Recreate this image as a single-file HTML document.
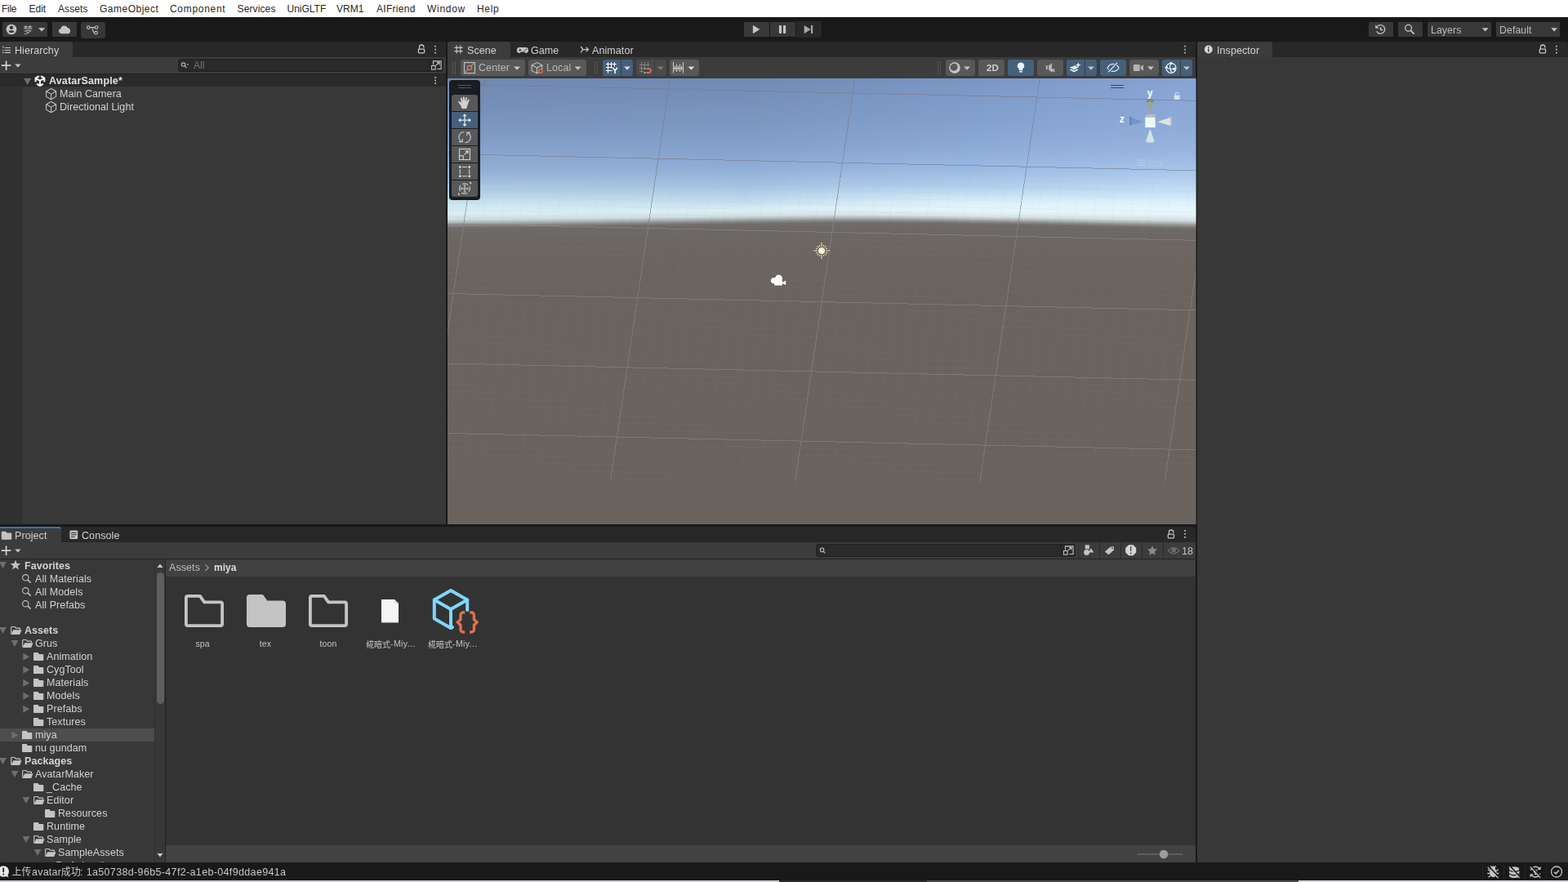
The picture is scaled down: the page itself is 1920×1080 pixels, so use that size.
<!DOCTYPE html>
<html><head><meta charset="utf-8"><title>Unity</title>
<style>
*{box-sizing:border-box;margin:0;padding:0}
html,body{width:1920px;height:1080px;overflow:hidden;background:#191919}
body{font-family:"Liberation Sans",sans-serif;font-size:12.5px;color:#d2d2d2;position:relative;letter-spacing:.08px;-webkit-font-smoothing:antialiased}
.a{position:absolute}
.t{position:absolute;white-space:nowrap;line-height:16px;height:16px;will-change:transform}
.b{font-weight:bold;letter-spacing:.06px}
svg{position:absolute;overflow:visible}
#menu{left:0;top:0;width:1920px;height:21px;background:#fff;color:#262626;font-size:12px;letter-spacing:0}
#menu span{position:absolute;top:3px;line-height:16px;white-space:nowrap}
#tb{left:0;top:21px;width:1920px;height:30px;background:#191919}
.tbb{position:absolute;top:27px;height:18px;background:#383838;border-radius:1px}
.tabrow{position:absolute;top:51px;height:19px;background:#282828}
.tab{position:absolute;top:0;height:19px;background:#3c3c3c;border-radius:3px 3px 0 0}
.ptb{position:absolute;background:#3c3c3c}
.pan{position:absolute;background:#383838}
.sb{position:absolute;top:73px;height:20px;background:#585858;border-radius:3px}
.sb.on{background:#46607c}
.sf{position:absolute;background:#2a2a2a;border:1px solid #212121;border-radius:3px}
.row{position:absolute;left:0;height:16px}
.ov{position:absolute;left:553px;width:32px;height:20px;background:#585858}
</style></head><body>
<!-- MENU -->
<div id="menu" class="a">
<span style="left:2px;letter-spacing:-.3px">File</span><span style="left:35.500px">Edit</span><span style="left:71px;letter-spacing:.1px">Assets</span><span style="left:122px;letter-spacing:.5px">GameObject</span><span style="left:208px;letter-spacing:.7px">Component</span><span style="left:290.500px;letter-spacing:.13px">Services</span><span style="left:351.500px">UniGLTF</span><span style="left:412px">VRM1</span><span style="left:461px;letter-spacing:.3px">AIFriend</span><span style="left:523px;letter-spacing:.7px">Window</span><span style="left:584px;letter-spacing:.65px">Help</span>
</div>
<!-- MAIN TOOLBAR -->
<div id="tb" class="a"></div>
<div class="tbb" style="left:3px;width:55px"></div>
<div class="tbb" style="left:64px;width:30px"></div>
<div class="tbb" style="left:99px;width:30px;height:20px;border-radius:3px"></div>
<svg style="left:0;top:21px" width="140" height="30" viewBox="0 21 140 30">
 <!-- account -->
 <circle cx="14" cy="36" r="6.3" fill="#c4c4c4"/>
 <circle cx="14" cy="33.800" r="2.200" fill="#383838"/>
 <ellipse cx="14" cy="38.700" rx="3.200" ry="1.400" fill="#383838"/>
 <!-- meng glyph -->
 <text x="28.3" y="41.2" font-size="11.8" fill="#b2b2b2" font-family="'Liberation Sans','Noto Sans CJK SC',sans-serif" letter-spacing="0">梦</text>
 <path d="M47 34.2h8.2l-4.1 4.4z" fill="#c4c4c4"/>
 <!-- cloud -->
 <path d="M74.8 41.2a3.1 3.1 0 0 1 -.5 -6.1a4.6 4.6 0 0 1 8.7 -.9a3.6 3.6 0 0 1 .6 7z" fill="#c4c4c4"/>
 <!-- vcs -->
 <g fill="none" stroke="#c4c4c4" stroke-width="1.1">
  <circle cx="108.300" cy="33.600" r="1.800"/><circle cx="118.100" cy="33.600" r="1.800"/><circle cx="117.500" cy="40.200" r="1.800"/>
  <path d="M110.100 33.600h6.200M112.400 33.700c1.400 0 1 6.500 3.400 6.500"/>
 </g>
</svg>
<!-- play controls -->
<div class="tbb" style="left:911px;width:31px;border-radius:1px 0 0 1px"></div>
<div class="tbb" style="left:943px;width:31px;border-radius:0"></div>
<div class="tbb" style="left:975px;width:30.5px;top:26px;height:19.5px;background:#28292a;border-radius:0 3px 3px 0"></div>
<svg style="left:905px;top:21px" width="110" height="30" viewBox="905 21 110 30">
 <path d="M921.9 30.8v10.4l8.5 -5.2z" fill="#c4c4c4"/>
 <rect x="953.9" y="31" width="3.2" height="10" rx="1" fill="#c4c4c4"/><rect x="959" y="31" width="3.2" height="10" rx="1" fill="#c4c4c4"/>
 <path d="M984.7 30.9v10.3l8 -5.15z" fill="#a4a8a8"/><rect x="993" y="31" width="2.2" height="10" fill="#a4a8a8"/>
</svg>
<!-- right -->
<div class="tbb" style="left:1676px;width:30px"></div>
<div class="tbb" style="left:1712px;width:30px"></div>
<div class="tbb" style="left:1748px;width:78px"></div>
<div class="tbb" style="left:1832px;width:78px"></div>
<div class="t" style="left:1751.500px;top:28.500px;color:#bcbcbc;font-size:12.300px">Layers</div>
<div class="t" style="left:1835.500px;top:28.500px;color:#bcbcbc;font-size:12.300px">Default</div>
<svg style="left:1670px;top:21px" width="250" height="30" viewBox="1670 21 250 30">
 <g fill="none" stroke="#c4c4c4" stroke-width="1.3">
  <path d="M1686.2 32.6a5.3 5.3 0 1 1 -.6 5.6"/>
  <path d="M1690.6 33.2v3.2h2.6" stroke-width="1.5"/>
  <circle cx="1724.6" cy="34.3" r="3.9"/><path d="M1727.4 37.3l4.2 4.4" stroke-width="1.8"/>
 </g>
 <path d="M1684.2 30.6v4.2h4.2z" fill="#c4c4c4"/>
 <path d="M1814.8 34.2h7.8l-3.9 4.2z" fill="#c4c4c4"/><path d="M1899.2 34.2h7.8l-3.9 4.2z" fill="#c4c4c4"/>
</svg>
<!-- HIERARCHY -->
<div class="tabrow" style="left:0;width:546px"><div class="tab" style="left:0;width:89px;border-radius:0 3px 0 0"></div></div>
<div class="ptb" style="left:0;top:70px;width:546px;height:20px"></div>
<div class="pan" style="left:0;top:90px;width:546px;height:552px"></div>
<div class="a" style="left:0;top:106px;width:27px;height:536px;background:#303030"></div>
<div class="a" style="left:0;top:90px;width:546px;height:16px;background:#2a2a2a;border-top:1px solid #222"></div>
<div class="t" style="left:18px;top:54px">Hierarchy</div>
<div class="sf" style="left:218px;top:72px;width:325px;height:15.5px"></div>
<div class="t" style="left:236.500px;top:72px;color:#747474;font-size:12px">All</div>
<div class="t b" style="left:60px;top:91px;color:#e0e0e0;letter-spacing:.17px">AvatarSample*</div>
<div class="t" style="left:73px;top:107px">Main Camera</div>
<div class="t" style="left:73px;top:123px">Directional Light</div>
<svg style="left:0;top:51px" width="546" height="100" viewBox="0 51 546 100">
 <!-- tab icon -->
 <g stroke="#c4c4c4" stroke-width="1.1" fill="none"><path d="M5.6 58.5H13M5.6 61.5H13M5.6 64.4H13"/></g>
 <g fill="#c4c4c4"><rect x="3" y="56.6" width="1.4" height="1.6"/><rect x="3" y="60.8" width="1.4" height="1.4"/><rect x="3" y="63.7" width="1.4" height="1.4"/></g>
 <!-- lock + kebab -->
 <g id="lk"><rect x="512.4" y="60.2" width="7.200" height="4.700" rx=".8" fill="none" stroke="#c4c4c4" stroke-width="1.300"/><path d="M513.5 60.0v-2.300a2.700 2.700 0 0 1 5.400 0v.7" fill="none" stroke="#c4c4c4" stroke-width="1.300"/></g>
 <g id="kb" fill="#c4c4c4"><rect x="532.2" y="55.8" width="1.7" height="1.7"/><rect x="532.2" y="59.8" width="1.7" height="1.7"/><rect x="532.2" y="63.8" width="1.7" height="1.7"/></g>
 <!-- plus -->
 <g id="pl"><path d="M1.8 80.2h11.6M7.6 74.4v11.6" stroke="#d2d2d2" stroke-width="1.7" fill="none"/><path d="M18.2 78.4h7.4l-3.7 4z" fill="#c4c4c4"/></g>
 <!-- search icon -->
 <g fill="none" stroke="#b4b4b4" stroke-width="1.2"><circle cx="224.6" cy="79" r="2.2"/><path d="M226.2 80.7l2.1 2.3"/></g><path d="M228.6 78.6h2.8l-1.4 1.6z" fill="#b4b4b4"/>
 <path d="M525.500 72.500v14.500" stroke="#1f1f1f" stroke-width="1"/>
 <!-- search window icon -->
 <g id="sw" fill="none" stroke="#c4c4c4" stroke-width="1.1"><path d="M530.5 79.5v-4.6h9.6v9.6h-4.6"/><rect x="528.5" y="80.5" width="4.6" height="4.6"/><path d="M533.6 80.2l4.2 -3.6M535 76.4h3v3" /></g>
 <!-- scene row -->
 <path d="M29.2 96h9l-4.5 8z" fill="#6e6e6e"/>
 <g id="ul" fill="none" stroke="#e9f3f7" stroke-width="2.100" stroke-linejoin="miter"><path d="M48.950 98.800L43.580 95.700M47.880 93.220L43.580 95.700V100.160M48.950 98.800L54.320 95.700M50.020 93.220L54.320 95.700V100.160M48.950 98.800V105M45.080 102.770L48.950 105L52.820 102.770"/></g>
 <rect x="532.3" y="94" width="1.7" height="1.7" fill="#c4c4c4"/><rect x="532.3" y="97.6" width="1.7" height="1.7" fill="#c4c4c4"/><rect x="532.3" y="101.2" width="1.7" height="1.7" fill="#c4c4c4"/>
 <!-- cubes -->
 <g id="cb" fill="none" stroke="#c4c4c4" stroke-width="1.05" stroke-linejoin="round"><path d="M62.6 108.5l6 3.3v6.6l-6 3.3l-6 -3.3v-6.6zM56.6 111.8l6 3.3l6 -3.3M62.6 115.1v6.6"/></g>
 <use href="#cb" y="16"/>
</svg>
<!-- SCENE TABS + TOOLBAR -->
<div class="tabrow" style="left:548px;width:916px"><div class="tab" style="left:0;width:77px"></div></div>
<div class="ptb" style="left:548px;top:70px;width:916px;height:26px"></div>
<div class="t" style="left:572px;top:53.500px">Scene</div>
<div class="t" style="left:650px;top:53.500px">Game</div>
<div class="t" style="left:725px;top:53.500px">Animator</div>
<div class="sb" style="left:564px;width:79px"></div>
<div class="sb" style="left:647px;width:71px"></div>
<div class="sb on" style="left:738px;width:22px;border-radius:3px 0 0 3px"></div><div class="sb on" style="left:761px;width:14px;border-radius:0 3px 3px 0"></div>
<div class="sb" style="left:779px;width:22px;border-radius:3px 0 0 3px;background:#4a4a4a"></div><div class="sb" style="left:802px;width:14px;border-radius:0 3px 3px 0;background:#4a4a4a"></div>
<div class="sb" style="left:820px;width:36px"></div>
<div class="sb" style="left:1158px;width:36px"></div>
<div class="sb" style="left:1198px;width:32px"></div>
<div class="sb on" style="left:1234px;width:32px"></div>
<div class="sb" style="left:1270px;width:32px"></div>
<div class="sb on" style="left:1306px;width:22px;border-radius:3px 0 0 3px"></div><div class="sb on" style="left:1329px;width:14px;border-radius:0 3px 3px 0"></div>
<div class="sb on" style="left:1347px;width:32px"></div>
<div class="sb" style="left:1383px;width:36px"></div>
<div class="sb on" style="left:1423px;width:22px;border-radius:3px 0 0 3px"></div><div class="sb on" style="left:1446px;width:14px;border-radius:0 3px 3px 0"></div>
<div class="t" style="left:585.5px;top:75px;color:#b8b8b8">Center</div>
<div class="t" style="left:668.5px;top:75px;color:#b8b8b8">Local</div>
<div class="t b" style="left:1207.5px;top:75px;color:#d0d0d0;font-size:11.5px;letter-spacing:0">2D</div>
<svg style="left:548px;top:51px" width="916" height="45" viewBox="548 51 916 45">
 <!-- tab icons -->
 <path d="M559.2 55.4v10M563.8 55.4v10M556.4 58.4h10.2M556.4 62.6h10.2" stroke="#c4c4c4" stroke-width="1.2" fill="none"/>
 <path d="M636.3 58h7.2a3.4 3.4 0 0 1 0 6.9l-1.7 -1.5h-3.8l-1.7 1.5a3.4 3.4 0 0 1 0 -6.9z" fill="#c4c4c4"/>
 <path d="M635.3 61.3h3M636.8 59.8v3" stroke="#282828" stroke-width="1"/><circle cx="642.4" cy="62.3" r=".8" fill="#282828"/><circle cx="644.2" cy="60.5" r=".8" fill="#282828"/>
 <g fill="none" stroke="#c4c4c4" stroke-width="1.3"><path d="M711.2 57l2.6 3.6h6.2M713.8 60.6l-2.6 3.8"/><path d="M717.8 58l2.6 2.6l-2.6 2.6"/></g>
 <rect x="1450.2" y="55.8" width="1.7" height="1.7" fill="#c4c4c4"/><rect x="1450.2" y="59.8" width="1.7" height="1.7" fill="#c4c4c4"/><rect x="1450.2" y="63.8" width="1.7" height="1.7" fill="#c4c4c4"/>
 <!-- separators -->
 <g stroke="#555" stroke-width="1"><path d="M554.5 75v16M557.5 75v16M728.5 75v16M731.5 75v16M1148.5 75v16M1151.5 75v16"/></g>
 <!-- center icon -->
 <rect x="568.5" y="76.6" width="13" height="13" fill="none" stroke="#c4c4c4" stroke-width="1.1"/>
 <path d="M570 88l3 -3M577 80.8l3 -3" stroke="#c4c4c4" stroke-width="1.1" stroke-dasharray="1.6 1"/>
 <circle cx="575" cy="83.1" r="2.6" fill="none" stroke="#e8734a" stroke-width="1.3"/>
 <path d="M629 81.4h8l-4 4.3z" fill="#c4c4c4"/>
 <!-- local icon -->
 <g fill="none" stroke="#c4c4c4" stroke-width="1.05" stroke-linejoin="round"><path d="M657.5 76.6l6.3 3.2v6.8l-6.3 3.2l-6.3 -3.2v-6.8zM651.2 79.8l6.3 3.2l6.3 -3.2M657.5 83v6.8"/></g>
 <circle cx="661.9" cy="86.9" r="2.9" fill="#585858"/><circle cx="661.9" cy="86.9" r="2.3" fill="none" stroke="#e8734a" stroke-width="1.3"/>
 <path d="M703.6 81.4h8l-4 4.3z" fill="#c4c4c4"/>
 <!-- grid Y -->
 <g stroke="#fff" stroke-width="1" fill="none"><path d="M744.500 76v13.500M748.500 76v7.500M752.500 76v5.500M742 78.500h13M742 82.500h7.500M742 86.500h7.500"/><path d="M750.300 82.800l2.800 3.700l2.800 -3.700M753.100 86.500v3.600" stroke-width="1.500"/></g>
 <path d="M764 81.4h8l-4 4.3z" fill="#d8d8d8"/>
 <!-- snap -->
 <g stroke="#8a8282" stroke-width="1" fill="none"><path d="M785.500 76v13M789.500 76v6.500M793.500 76v5.500M783 79.500h12.500M783 83.500h5M783 87.500h5"/></g>
 <path d="M791.400 84.100h3a2.500 2.500 0 0 1 0 5h-3" fill="none" stroke="#d77a56" stroke-width="1.600"/>
 <rect x="788.500" y="83.200" width="1.900" height="1.800" fill="#b8c0c0"/><rect x="788.500" y="88.200" width="1.900" height="1.800" fill="#b8c0c0"/>
 <path d="M805 81.4h8l-4 4.3z" fill="#7d7878"/>
 <!-- ruler -->
 <g stroke="#d0d0d0" stroke-width="1" fill="none"><path d="M824.500 76v13.500M836.500 76v13.500M824.500 83.500h12M826.500 80.500v6M828.500 78.500v9.500M830.500 80.500v6M832.500 78.500v9.500M834.500 80.500v6"/></g>
 <path d="M842.4 81.4h8l-4 4.3z" fill="#d8d8d8"/>
 <!-- shading -->
 <circle cx="1169" cy="83" r="6.600" fill="#c4c4c4"/><circle cx="1168" cy="82" r="4.700" fill="#585858"/><circle cx="1169" cy="83" r="6.100" fill="none" stroke="#c4c4c4" stroke-width="1.100"/>
 <path d="M1180 81.4h8l-4 4.3z" fill="#c4c4c4"/>
 <!-- bulb -->
 <path d="M1250 76.4a4.2 4.2 0 0 1 2.3 7.7v1.8h-4.6v-1.8a4.2 4.2 0 0 1 2.3 -7.7z" fill="#e8f1f5"/><path d="M1247.9 86.8h4.2a2.1 2.1 0 0 1 -4.2 0z" fill="#e8f1f5"/>
 <!-- audio -->
 <rect x="1280.8" y="80" width="2" height="5.2" fill="#b4b4b4"/><path d="M1284 80.2l4 -3v11.4l-4 -3z" fill="#b4b4b4"/>
 <path d="M1287.6 84.2l3.8 3.8M1291.4 84.2l-3.8 3.8" stroke="#c4c4c4" stroke-width="1.2"/>
 <!-- fx -->
 <g fill="#e8f1f5"><path d="M1316.4 80.3l4.2 2.3l-5.4 2.8l-5.4 -2.8z"/><path d="M1309.8 85.5l1.6 -.9l3.8 2l3.8 -2l1.6 .9l-5.4 2.9z"/><path d="M1320.3 76.2l.9 2.5l2.5 .9l-2.5 .9l-.9 2.5l-.9 -2.5l-2.5 -.9l2.5 -.9z"/></g>
 <path d="M1332 81.4h8l-4 4.3z" fill="#c4c4c4"/>
 <!-- hidden eye -->
 <path d="M1356 83c2 -3.4 5 -4.6 7.200 -4.600c3 0 5.600 2 6.800 4.600c-1.200 2.600 -3.800 4.400 -6.800 4.400c-3 0 -5.600 -1.600 -7.200 -4.400z" fill="none" stroke="#dfe8ec" stroke-width="1.2"/>
 <path d="M1357.200 88.400l10.800 -11.600" stroke="#46607c" stroke-width="3.200"/><path d="M1357.200 88.400l10.800 -11.600" stroke="#dfe8ec" stroke-width="1.300"/>
 <!-- camera -->
 <rect x="1387.800" y="79" width="8" height="8" rx="1" fill="#b4b4b4"/><path d="M1396.800 81.600l3.200 -2.400v7.600l-3.200 -2.400z" fill="#b4b4b4"/>
 <path d="M1405 81.400h8l-4 4.300z" fill="#c4c4c4"/>
 <!-- gizmo sphere -->
 <g fill="none" stroke="#eef4f7" stroke-width="1.200"><circle cx="1434" cy="83.300" r="6"/><path d="M1428.200 82.400c3.200 2.600 8 2.600 11.600 .4M1434 77.300c-2.600 3.800 -1.600 9 1.600 11.600"/></g>
 <g fill="#eef4f7"><circle cx="1434" cy="77.200" r="1.500"/><circle cx="1428.300" cy="82.300" r="1.500"/><circle cx="1437.600" cy="84.600" r="1.500"/></g>
 <path d="M1449 81.400h8l-4 4.300z" fill="#c4c4c4"/>
</svg>
<!-- SCENE VIEW -->
<svg style="left:548px;top:96px" width="916" height="546" viewBox="548 96 916 546">
<defs>
<linearGradient id="g0" gradientUnits="userSpaceOnUse" x1="0" y1="96" x2="0" y2="642"><stop offset="0.0019" stop-color="#7088b2"/><stop offset="0.1081" stop-color="#7b96bf"/><stop offset="0.1612" stop-color="#86a2cc"/><stop offset="0.2088" stop-color="#93b0d5"/><stop offset="0.2510" stop-color="#aecbe3"/><stop offset="0.2858" stop-color="#d0e8f0"/><stop offset="0.3041" stop-color="#d8eef2"/><stop offset="0.3169" stop-color="#cbdbe0"/><stop offset="0.3242" stop-color="#a8aeb0"/><stop offset="0.3297" stop-color="#878685"/><stop offset="0.3352" stop-color="#706c6a"/><stop offset="0.3407" stop-color="#6d6967"/><stop offset="0.3810" stop-color="#6c6561"/><stop offset="0.4451" stop-color="#6a635e"/><stop offset="1" stop-color="#6a625d"/></linearGradient>
<linearGradient id="g1" gradientUnits="userSpaceOnUse" x1="0" y1="96" x2="0" y2="642"><stop offset="0.0016" stop-color="#7088b2"/><stop offset="0.1078" stop-color="#7b96bf"/><stop offset="0.1610" stop-color="#86a2cc"/><stop offset="0.2086" stop-color="#93b0d5"/><stop offset="0.2507" stop-color="#aecbe3"/><stop offset="0.2855" stop-color="#d0e8f0"/><stop offset="0.3038" stop-color="#d8eef2"/><stop offset="0.3166" stop-color="#cbdbe0"/><stop offset="0.3240" stop-color="#a8aeb0"/><stop offset="0.3295" stop-color="#878685"/><stop offset="0.3349" stop-color="#706c6a"/><stop offset="0.3404" stop-color="#6d6967"/><stop offset="0.3807" stop-color="#6c6561"/><stop offset="0.4448" stop-color="#6a635e"/><stop offset="1" stop-color="#6a625d"/></linearGradient>
<linearGradient id="g2" gradientUnits="userSpaceOnUse" x1="0" y1="96" x2="0" y2="642"><stop offset="0.0013" stop-color="#7088b2"/><stop offset="0.1076" stop-color="#7b96bf"/><stop offset="0.1607" stop-color="#86a2cc"/><stop offset="0.2083" stop-color="#93b0d5"/><stop offset="0.2504" stop-color="#aecbe3"/><stop offset="0.2852" stop-color="#d0e8f0"/><stop offset="0.3035" stop-color="#d8eef2"/><stop offset="0.3164" stop-color="#cbdbe0"/><stop offset="0.3237" stop-color="#a8aeb0"/><stop offset="0.3292" stop-color="#878685"/><stop offset="0.3347" stop-color="#706c6a"/><stop offset="0.3402" stop-color="#6d6967"/><stop offset="0.3805" stop-color="#6c6561"/><stop offset="0.4446" stop-color="#6a635e"/><stop offset="1" stop-color="#6a625d"/></linearGradient>
<linearGradient id="g3" gradientUnits="userSpaceOnUse" x1="0" y1="96" x2="0" y2="642"><stop offset="0.0011" stop-color="#7088b2"/><stop offset="0.1073" stop-color="#7b96bf"/><stop offset="0.1604" stop-color="#86a2cc"/><stop offset="0.2080" stop-color="#93b0d5"/><stop offset="0.2502" stop-color="#aecbe3"/><stop offset="0.2850" stop-color="#d0e8f0"/><stop offset="0.3033" stop-color="#d8eef2"/><stop offset="0.3161" stop-color="#cbdbe0"/><stop offset="0.3234" stop-color="#a8aeb0"/><stop offset="0.3289" stop-color="#878685"/><stop offset="0.3344" stop-color="#706c6a"/><stop offset="0.3399" stop-color="#6d6967"/><stop offset="0.3802" stop-color="#6c6561"/><stop offset="0.4443" stop-color="#6a635e"/><stop offset="1" stop-color="#6a625d"/></linearGradient>
<linearGradient id="g4" gradientUnits="userSpaceOnUse" x1="0" y1="96" x2="0" y2="642"><stop offset="0.0008" stop-color="#7088b2"/><stop offset="0.1070" stop-color="#7b96bf"/><stop offset="0.1601" stop-color="#86a2cc"/><stop offset="0.2078" stop-color="#93b0d5"/><stop offset="0.2499" stop-color="#aecbe3"/><stop offset="0.2847" stop-color="#d0e8f0"/><stop offset="0.3030" stop-color="#d8eef2"/><stop offset="0.3158" stop-color="#cbdbe0"/><stop offset="0.3232" stop-color="#a8aeb0"/><stop offset="0.3286" stop-color="#878685"/><stop offset="0.3341" stop-color="#706c6a"/><stop offset="0.3396" stop-color="#6d6967"/><stop offset="0.3799" stop-color="#6c6561"/><stop offset="0.4440" stop-color="#6a635e"/><stop offset="1" stop-color="#6a625d"/></linearGradient>
<linearGradient id="g5" gradientUnits="userSpaceOnUse" x1="0" y1="96" x2="0" y2="642"><stop offset="0.0005" stop-color="#7088b2"/><stop offset="0.1068" stop-color="#7b96bf"/><stop offset="0.1599" stop-color="#86a2cc"/><stop offset="0.2075" stop-color="#93b0d5"/><stop offset="0.2496" stop-color="#aecbe3"/><stop offset="0.2844" stop-color="#cfe7f0"/><stop offset="0.3027" stop-color="#d8eef2"/><stop offset="0.3156" stop-color="#cbdbe0"/><stop offset="0.3229" stop-color="#a8aeb0"/><stop offset="0.3284" stop-color="#878685"/><stop offset="0.3339" stop-color="#706c6a"/><stop offset="0.3394" stop-color="#6d6967"/><stop offset="0.3797" stop-color="#6c6561"/><stop offset="0.4438" stop-color="#6a635e"/><stop offset="1" stop-color="#6a625d"/></linearGradient>
<linearGradient id="g6" gradientUnits="userSpaceOnUse" x1="0" y1="96" x2="0" y2="642"><stop offset="0.0003" stop-color="#7088b2"/><stop offset="0.1065" stop-color="#7b96bf"/><stop offset="0.1596" stop-color="#86a2cc"/><stop offset="0.2072" stop-color="#93b0d5"/><stop offset="0.2494" stop-color="#adcae3"/><stop offset="0.2842" stop-color="#cfe7f0"/><stop offset="0.3025" stop-color="#d8eef2"/><stop offset="0.3153" stop-color="#cbdce1"/><stop offset="0.3226" stop-color="#a8aeb0"/><stop offset="0.3281" stop-color="#878685"/><stop offset="0.3336" stop-color="#706c6a"/><stop offset="0.3391" stop-color="#6d6967"/><stop offset="0.3794" stop-color="#6c6561"/><stop offset="0.4435" stop-color="#6a635e"/><stop offset="1" stop-color="#6a625d"/></linearGradient>
<linearGradient id="g7" gradientUnits="userSpaceOnUse" x1="0" y1="96" x2="0" y2="642"><stop offset="0.0000" stop-color="#7088b2"/><stop offset="0.1062" stop-color="#7b96bf"/><stop offset="0.1593" stop-color="#86a2cc"/><stop offset="0.2070" stop-color="#92b0d5"/><stop offset="0.2491" stop-color="#adcae3"/><stop offset="0.2839" stop-color="#cee6f0"/><stop offset="0.3022" stop-color="#d8eef3"/><stop offset="0.3150" stop-color="#ccdce1"/><stop offset="0.3223" stop-color="#a8aeb0"/><stop offset="0.3278" stop-color="#878685"/><stop offset="0.3333" stop-color="#706c6a"/><stop offset="0.3388" stop-color="#6d6967"/><stop offset="0.3791" stop-color="#6c6561"/><stop offset="0.4432" stop-color="#6a635e"/><stop offset="1" stop-color="#6a625d"/></linearGradient>
<linearGradient id="g8" gradientUnits="userSpaceOnUse" x1="0" y1="96" x2="0" y2="642"><stop offset="0.0000" stop-color="#7088b2"/><stop offset="0.1058" stop-color="#7b96bf"/><stop offset="0.1589" stop-color="#85a2cc"/><stop offset="0.2065" stop-color="#92afd5"/><stop offset="0.2487" stop-color="#acc9e3"/><stop offset="0.2835" stop-color="#cde6f0"/><stop offset="0.3018" stop-color="#d9eef3"/><stop offset="0.3146" stop-color="#ccdce1"/><stop offset="0.3219" stop-color="#a8aeb0"/><stop offset="0.3274" stop-color="#878685"/><stop offset="0.3329" stop-color="#706c6a"/><stop offset="0.3384" stop-color="#6d6967"/><stop offset="0.3787" stop-color="#6c6561"/><stop offset="0.4428" stop-color="#6a635e"/><stop offset="1" stop-color="#6a625d"/></linearGradient>
<linearGradient id="g9" gradientUnits="userSpaceOnUse" x1="0" y1="96" x2="0" y2="642"><stop offset="0.0000" stop-color="#7089b3"/><stop offset="0.1054" stop-color="#7b96c0"/><stop offset="0.1585" stop-color="#85a1cc"/><stop offset="0.2061" stop-color="#92afd5"/><stop offset="0.2483" stop-color="#acc9e3"/><stop offset="0.2831" stop-color="#cde5ef"/><stop offset="0.3014" stop-color="#d9eff3"/><stop offset="0.3142" stop-color="#ccdce2"/><stop offset="0.3215" stop-color="#a9afb1"/><stop offset="0.3270" stop-color="#878685"/><stop offset="0.3325" stop-color="#706c6a"/><stop offset="0.3380" stop-color="#6d6967"/><stop offset="0.3783" stop-color="#6c6561"/><stop offset="0.4424" stop-color="#6a635e"/><stop offset="1" stop-color="#6a625d"/></linearGradient>
<linearGradient id="g10" gradientUnits="userSpaceOnUse" x1="0" y1="96" x2="0" y2="642"><stop offset="0.0000" stop-color="#7089b3"/><stop offset="0.1050" stop-color="#7b96c0"/><stop offset="0.1581" stop-color="#85a1cc"/><stop offset="0.2057" stop-color="#92afd5"/><stop offset="0.2478" stop-color="#abc8e3"/><stop offset="0.2826" stop-color="#cce4ef"/><stop offset="0.3010" stop-color="#d9eff3"/><stop offset="0.3138" stop-color="#ccdde2"/><stop offset="0.3211" stop-color="#a9afb1"/><stop offset="0.3266" stop-color="#878685"/><stop offset="0.3321" stop-color="#706c6a"/><stop offset="0.3376" stop-color="#6d6967"/><stop offset="0.3779" stop-color="#6c6561"/><stop offset="0.4420" stop-color="#6a635e"/><stop offset="1" stop-color="#6a625d"/></linearGradient>
<linearGradient id="g11" gradientUnits="userSpaceOnUse" x1="0" y1="96" x2="0" y2="642"><stop offset="0.0000" stop-color="#7089b3"/><stop offset="0.1046" stop-color="#7b96c0"/><stop offset="0.1577" stop-color="#85a1cc"/><stop offset="0.2053" stop-color="#92afd5"/><stop offset="0.2474" stop-color="#abc8e3"/><stop offset="0.2822" stop-color="#cce4ef"/><stop offset="0.3005" stop-color="#d9eff3"/><stop offset="0.3134" stop-color="#ccdde2"/><stop offset="0.3207" stop-color="#a9afb1"/><stop offset="0.3262" stop-color="#878685"/><stop offset="0.3317" stop-color="#706c6a"/><stop offset="0.3372" stop-color="#6d6967"/><stop offset="0.3775" stop-color="#6c6561"/><stop offset="0.4416" stop-color="#6a635e"/><stop offset="1" stop-color="#6a625d"/></linearGradient>
<linearGradient id="g12" gradientUnits="userSpaceOnUse" x1="0" y1="96" x2="0" y2="642"><stop offset="0.0000" stop-color="#7089b3"/><stop offset="0.1042" stop-color="#7b96c0"/><stop offset="0.1573" stop-color="#85a1cc"/><stop offset="0.2049" stop-color="#91afd5"/><stop offset="0.2470" stop-color="#abc8e3"/><stop offset="0.2818" stop-color="#cbe3ef"/><stop offset="0.3001" stop-color="#d9eff4"/><stop offset="0.3129" stop-color="#cddde3"/><stop offset="0.3203" stop-color="#a9afb1"/><stop offset="0.3258" stop-color="#878685"/><stop offset="0.3313" stop-color="#706c6a"/><stop offset="0.3368" stop-color="#6d6967"/><stop offset="0.3770" stop-color="#6c6561"/><stop offset="0.4411" stop-color="#6a635e"/><stop offset="1" stop-color="#6a625d"/></linearGradient>
<linearGradient id="g13" gradientUnits="userSpaceOnUse" x1="0" y1="96" x2="0" y2="642"><stop offset="0.0000" stop-color="#7089b3"/><stop offset="0.1037" stop-color="#7b96c0"/><stop offset="0.1568" stop-color="#85a1cc"/><stop offset="0.2045" stop-color="#91afd5"/><stop offset="0.2466" stop-color="#aac7e3"/><stop offset="0.2814" stop-color="#cae3ef"/><stop offset="0.2997" stop-color="#d9eff4"/><stop offset="0.3125" stop-color="#cddde3"/><stop offset="0.3199" stop-color="#a9afb1"/><stop offset="0.3253" stop-color="#878685"/><stop offset="0.3308" stop-color="#706c6a"/><stop offset="0.3363" stop-color="#6d6967"/><stop offset="0.3766" stop-color="#6c6561"/><stop offset="0.4407" stop-color="#6a635e"/><stop offset="1" stop-color="#6a625d"/></linearGradient>
<linearGradient id="g14" gradientUnits="userSpaceOnUse" x1="0" y1="96" x2="0" y2="642"><stop offset="0.0000" stop-color="#7189b3"/><stop offset="0.1033" stop-color="#7b97c0"/><stop offset="0.1564" stop-color="#84a1cb"/><stop offset="0.2041" stop-color="#91aed6"/><stop offset="0.2462" stop-color="#aac7e3"/><stop offset="0.2810" stop-color="#cae2ef"/><stop offset="0.2993" stop-color="#daeff4"/><stop offset="0.3121" stop-color="#cddee3"/><stop offset="0.3194" stop-color="#a9afb1"/><stop offset="0.3249" stop-color="#878685"/><stop offset="0.3304" stop-color="#706c6a"/><stop offset="0.3359" stop-color="#6d6967"/><stop offset="0.3762" stop-color="#6c6561"/><stop offset="0.4403" stop-color="#6a635e"/><stop offset="1" stop-color="#6a625d"/></linearGradient>
<linearGradient id="g15" gradientUnits="userSpaceOnUse" x1="0" y1="96" x2="0" y2="642"><stop offset="0.0000" stop-color="#7189b3"/><stop offset="0.1029" stop-color="#7b97c0"/><stop offset="0.1560" stop-color="#84a1cb"/><stop offset="0.2036" stop-color="#91aed6"/><stop offset="0.2458" stop-color="#a9c6e3"/><stop offset="0.2805" stop-color="#c9e2ef"/><stop offset="0.2989" stop-color="#daeff4"/><stop offset="0.3117" stop-color="#cddee4"/><stop offset="0.3190" stop-color="#a9afb1"/><stop offset="0.3245" stop-color="#878685"/><stop offset="0.3300" stop-color="#706c6a"/><stop offset="0.3355" stop-color="#6d6967"/><stop offset="0.3758" stop-color="#6c6561"/><stop offset="0.4399" stop-color="#6a635e"/><stop offset="1" stop-color="#6a625d"/></linearGradient>
<linearGradient id="g16" gradientUnits="userSpaceOnUse" x1="0" y1="96" x2="0" y2="642"><stop offset="0.0000" stop-color="#7189b3"/><stop offset="0.1025" stop-color="#7b97c0"/><stop offset="0.1556" stop-color="#84a1cb"/><stop offset="0.2032" stop-color="#90aed6"/><stop offset="0.2453" stop-color="#a9c6e3"/><stop offset="0.2801" stop-color="#c8e1ef"/><stop offset="0.2984" stop-color="#daeff5"/><stop offset="0.3112" stop-color="#cedee4"/><stop offset="0.3186" stop-color="#a9afb1"/><stop offset="0.3241" stop-color="#878685"/><stop offset="0.3296" stop-color="#706c6a"/><stop offset="0.3351" stop-color="#6d6967"/><stop offset="0.3753" stop-color="#6c6561"/><stop offset="0.4395" stop-color="#6a635e"/><stop offset="1" stop-color="#6a625d"/></linearGradient>
<linearGradient id="g17" gradientUnits="userSpaceOnUse" x1="0" y1="96" x2="0" y2="642"><stop offset="0.0000" stop-color="#7189b3"/><stop offset="0.1020" stop-color="#7b97c0"/><stop offset="0.1551" stop-color="#84a1cb"/><stop offset="0.2027" stop-color="#90aed6"/><stop offset="0.2449" stop-color="#a8c5e3"/><stop offset="0.2797" stop-color="#c8e0ef"/><stop offset="0.2980" stop-color="#daeff5"/><stop offset="0.3108" stop-color="#cedee4"/><stop offset="0.3181" stop-color="#a9afb1"/><stop offset="0.3236" stop-color="#878685"/><stop offset="0.3291" stop-color="#706c6a"/><stop offset="0.3346" stop-color="#6d6967"/><stop offset="0.3749" stop-color="#6c6561"/><stop offset="0.4390" stop-color="#6a635e"/><stop offset="1" stop-color="#6a625d"/></linearGradient>
<linearGradient id="g18" gradientUnits="userSpaceOnUse" x1="0" y1="96" x2="0" y2="642"><stop offset="0.0000" stop-color="#7189b3"/><stop offset="0.1016" stop-color="#7b97c0"/><stop offset="0.1547" stop-color="#84a1cb"/><stop offset="0.2023" stop-color="#90aed6"/><stop offset="0.2444" stop-color="#a8c5e3"/><stop offset="0.2792" stop-color="#c7e0ef"/><stop offset="0.2975" stop-color="#daeff5"/><stop offset="0.3104" stop-color="#cedfe4"/><stop offset="0.3177" stop-color="#a9afb1"/><stop offset="0.3232" stop-color="#878685"/><stop offset="0.3287" stop-color="#706c6a"/><stop offset="0.3342" stop-color="#6d6967"/><stop offset="0.3745" stop-color="#6c6561"/><stop offset="0.4386" stop-color="#6a635e"/><stop offset="1" stop-color="#6a625d"/></linearGradient>
<linearGradient id="g19" gradientUnits="userSpaceOnUse" x1="0" y1="96" x2="0" y2="642"><stop offset="0.0000" stop-color="#718ab4"/><stop offset="0.1011" stop-color="#7b97c1"/><stop offset="0.1542" stop-color="#84a0cb"/><stop offset="0.2019" stop-color="#90aed6"/><stop offset="0.2440" stop-color="#a8c5e3"/><stop offset="0.2788" stop-color="#c6dfee"/><stop offset="0.2971" stop-color="#daf0f5"/><stop offset="0.3099" stop-color="#cedfe5"/><stop offset="0.3173" stop-color="#aab0b2"/><stop offset="0.3227" stop-color="#878685"/><stop offset="0.3282" stop-color="#706c6a"/><stop offset="0.3337" stop-color="#6d6967"/><stop offset="0.3740" stop-color="#6c6561"/><stop offset="0.4381" stop-color="#6a635e"/><stop offset="1" stop-color="#6a625d"/></linearGradient>
<linearGradient id="g20" gradientUnits="userSpaceOnUse" x1="0" y1="96" x2="0" y2="642"><stop offset="0.0000" stop-color="#718ab4"/><stop offset="0.1007" stop-color="#7b97c1"/><stop offset="0.1538" stop-color="#83a0cb"/><stop offset="0.2014" stop-color="#90add6"/><stop offset="0.2436" stop-color="#a7c4e3"/><stop offset="0.2784" stop-color="#c6dfee"/><stop offset="0.2967" stop-color="#dbf0f5"/><stop offset="0.3095" stop-color="#cedfe5"/><stop offset="0.3168" stop-color="#aab0b2"/><stop offset="0.3223" stop-color="#878685"/><stop offset="0.3278" stop-color="#706c6a"/><stop offset="0.3333" stop-color="#6d6967"/><stop offset="0.3736" stop-color="#6c6561"/><stop offset="0.4377" stop-color="#6a635e"/><stop offset="1" stop-color="#6a625d"/></linearGradient>
<linearGradient id="g21" gradientUnits="userSpaceOnUse" x1="0" y1="96" x2="0" y2="642"><stop offset="0.0000" stop-color="#718ab4"/><stop offset="0.1003" stop-color="#7b97c1"/><stop offset="0.1534" stop-color="#83a0cb"/><stop offset="0.2010" stop-color="#8fadd6"/><stop offset="0.2431" stop-color="#a7c4e3"/><stop offset="0.2779" stop-color="#c5deee"/><stop offset="0.2962" stop-color="#dbf0f6"/><stop offset="0.3090" stop-color="#cfe0e5"/><stop offset="0.3164" stop-color="#aab0b2"/><stop offset="0.3219" stop-color="#878685"/><stop offset="0.3274" stop-color="#706c6a"/><stop offset="0.3329" stop-color="#6d6967"/><stop offset="0.3732" stop-color="#6c6561"/><stop offset="0.4373" stop-color="#6a635e"/><stop offset="1" stop-color="#6a625d"/></linearGradient>
<linearGradient id="g22" gradientUnits="userSpaceOnUse" x1="0" y1="96" x2="0" y2="642"><stop offset="0.0000" stop-color="#718ab4"/><stop offset="0.0998" stop-color="#7b97c1"/><stop offset="0.1529" stop-color="#83a0cb"/><stop offset="0.2005" stop-color="#8fadd6"/><stop offset="0.2427" stop-color="#a6c3e3"/><stop offset="0.2775" stop-color="#c4ddee"/><stop offset="0.2958" stop-color="#dbf0f6"/><stop offset="0.3086" stop-color="#cfe0e6"/><stop offset="0.3159" stop-color="#aab0b2"/><stop offset="0.3214" stop-color="#878685"/><stop offset="0.3269" stop-color="#706c6a"/><stop offset="0.3324" stop-color="#6d6967"/><stop offset="0.3727" stop-color="#6c6561"/><stop offset="0.4368" stop-color="#6a635e"/><stop offset="1" stop-color="#6a625d"/></linearGradient>
<linearGradient id="g23" gradientUnits="userSpaceOnUse" x1="0" y1="96" x2="0" y2="642"><stop offset="0.0000" stop-color="#718ab4"/><stop offset="0.0994" stop-color="#7b97c1"/><stop offset="0.1525" stop-color="#83a0cb"/><stop offset="0.2001" stop-color="#8fadd6"/><stop offset="0.2423" stop-color="#a6c3e3"/><stop offset="0.2771" stop-color="#c4ddee"/><stop offset="0.2954" stop-color="#dbf0f6"/><stop offset="0.3082" stop-color="#cfe0e6"/><stop offset="0.3155" stop-color="#aab0b2"/><stop offset="0.3210" stop-color="#878685"/><stop offset="0.3265" stop-color="#706c6a"/><stop offset="0.3320" stop-color="#6d6967"/><stop offset="0.3723" stop-color="#6c6561"/><stop offset="0.4364" stop-color="#6a635e"/><stop offset="1" stop-color="#6a625d"/></linearGradient>
<linearGradient id="g24" gradientUnits="userSpaceOnUse" x1="0" y1="96" x2="0" y2="642"><stop offset="0.0000" stop-color="#728bb5"/><stop offset="0.0990" stop-color="#7c98c2"/><stop offset="0.1521" stop-color="#84a1cc"/><stop offset="0.1997" stop-color="#90aed7"/><stop offset="0.2418" stop-color="#a7c4e4"/><stop offset="0.2766" stop-color="#c6deef"/><stop offset="0.2950" stop-color="#dcf0f6"/><stop offset="0.3078" stop-color="#d0e1e6"/><stop offset="0.3151" stop-color="#abb1b3"/><stop offset="0.3206" stop-color="#878685"/><stop offset="0.3261" stop-color="#706c6a"/><stop offset="0.3316" stop-color="#6d6967"/><stop offset="0.3719" stop-color="#6c6561"/><stop offset="0.4360" stop-color="#6a635e"/><stop offset="1" stop-color="#6a625d"/></linearGradient>
<linearGradient id="g25" gradientUnits="userSpaceOnUse" x1="0" y1="96" x2="0" y2="642"><stop offset="0.0000" stop-color="#728cb6"/><stop offset="0.0986" stop-color="#7c98c3"/><stop offset="0.1517" stop-color="#84a1cd"/><stop offset="0.1993" stop-color="#90aed8"/><stop offset="0.2414" stop-color="#a7c4e4"/><stop offset="0.2762" stop-color="#c7dff0"/><stop offset="0.2945" stop-color="#dcf1f7"/><stop offset="0.3074" stop-color="#d0e1e7"/><stop offset="0.3147" stop-color="#abb1b3"/><stop offset="0.3202" stop-color="#878786"/><stop offset="0.3257" stop-color="#706c6a"/><stop offset="0.3312" stop-color="#6d6967"/><stop offset="0.3715" stop-color="#6c6561"/><stop offset="0.4356" stop-color="#6a635e"/><stop offset="1" stop-color="#6a625d"/></linearGradient>
<linearGradient id="g26" gradientUnits="userSpaceOnUse" x1="0" y1="96" x2="0" y2="642"><stop offset="0.0000" stop-color="#738cb7"/><stop offset="0.0982" stop-color="#7d99c4"/><stop offset="0.1513" stop-color="#85a2cd"/><stop offset="0.1989" stop-color="#91afd8"/><stop offset="0.2410" stop-color="#a8c5e5"/><stop offset="0.2758" stop-color="#c8e1f0"/><stop offset="0.2941" stop-color="#ddf1f7"/><stop offset="0.3070" stop-color="#d1e1e7"/><stop offset="0.3143" stop-color="#acb2b4"/><stop offset="0.3198" stop-color="#888786"/><stop offset="0.3253" stop-color="#706c6a"/><stop offset="0.3308" stop-color="#6d6967"/><stop offset="0.3711" stop-color="#6c6561"/><stop offset="0.4352" stop-color="#6a635e"/><stop offset="1" stop-color="#6a625d"/></linearGradient>
<linearGradient id="g27" gradientUnits="userSpaceOnUse" x1="0" y1="96" x2="0" y2="642"><stop offset="0.0000" stop-color="#738db8"/><stop offset="0.0977" stop-color="#7d99c4"/><stop offset="0.1509" stop-color="#85a2ce"/><stop offset="0.1985" stop-color="#91b0d9"/><stop offset="0.2406" stop-color="#a9c6e5"/><stop offset="0.2754" stop-color="#c9e2f1"/><stop offset="0.2937" stop-color="#ddf1f7"/><stop offset="0.3065" stop-color="#d2e2e8"/><stop offset="0.3139" stop-color="#acb2b4"/><stop offset="0.3194" stop-color="#888786"/><stop offset="0.3249" stop-color="#706c6a"/><stop offset="0.3303" stop-color="#6d6967"/><stop offset="0.3706" stop-color="#6c6561"/><stop offset="0.4347" stop-color="#6a635e"/><stop offset="1" stop-color="#6a625d"/></linearGradient>
<linearGradient id="g28" gradientUnits="userSpaceOnUse" x1="0" y1="96" x2="0" y2="642"><stop offset="0.0000" stop-color="#748eb9"/><stop offset="0.0974" stop-color="#7e9ac5"/><stop offset="0.1505" stop-color="#86a3cf"/><stop offset="0.1981" stop-color="#92b0da"/><stop offset="0.2403" stop-color="#a9c6e6"/><stop offset="0.2751" stop-color="#cbe3f2"/><stop offset="0.2934" stop-color="#def2f8"/><stop offset="0.3062" stop-color="#d2e2e8"/><stop offset="0.3135" stop-color="#adb3b5"/><stop offset="0.3190" stop-color="#888786"/><stop offset="0.3245" stop-color="#706c6a"/><stop offset="0.3300" stop-color="#6d6967"/><stop offset="0.3703" stop-color="#6c6561"/><stop offset="0.4344" stop-color="#6a635e"/><stop offset="1" stop-color="#6a625d"/></linearGradient>
<linearGradient id="g29" gradientUnits="userSpaceOnUse" x1="0" y1="96" x2="0" y2="642"><stop offset="0.0000" stop-color="#748eba"/><stop offset="0.0973" stop-color="#7e9bc6"/><stop offset="0.1504" stop-color="#86a4cf"/><stop offset="0.1980" stop-color="#93b1da"/><stop offset="0.2401" stop-color="#aac7e6"/><stop offset="0.2749" stop-color="#cce4f2"/><stop offset="0.2932" stop-color="#def2f8"/><stop offset="0.3060" stop-color="#d3e3e8"/><stop offset="0.3134" stop-color="#aeb4b6"/><stop offset="0.3189" stop-color="#888787"/><stop offset="0.3244" stop-color="#706c6a"/><stop offset="0.3299" stop-color="#6d6967"/><stop offset="0.3701" stop-color="#6c6561"/><stop offset="0.4342" stop-color="#6a635e"/><stop offset="1" stop-color="#6a625d"/></linearGradient>
<linearGradient id="g30" gradientUnits="userSpaceOnUse" x1="0" y1="96" x2="0" y2="642"><stop offset="0.0000" stop-color="#758fbb"/><stop offset="0.0971" stop-color="#7f9bc7"/><stop offset="0.1502" stop-color="#87a4d0"/><stop offset="0.1978" stop-color="#93b2db"/><stop offset="0.2400" stop-color="#abc8e7"/><stop offset="0.2748" stop-color="#cde5f3"/><stop offset="0.2931" stop-color="#dff2f8"/><stop offset="0.3059" stop-color="#d4e3e9"/><stop offset="0.3132" stop-color="#aeb4b6"/><stop offset="0.3187" stop-color="#888887"/><stop offset="0.3242" stop-color="#706c6a"/><stop offset="0.3297" stop-color="#6d6967"/><stop offset="0.3700" stop-color="#6c6561"/><stop offset="0.4341" stop-color="#6a635e"/><stop offset="1" stop-color="#6a625d"/></linearGradient>
<linearGradient id="g31" gradientUnits="userSpaceOnUse" x1="0" y1="96" x2="0" y2="642"><stop offset="0.0000" stop-color="#7590bc"/><stop offset="0.0970" stop-color="#7f9cc8"/><stop offset="0.1501" stop-color="#87a5d1"/><stop offset="0.1977" stop-color="#94b2dc"/><stop offset="0.2398" stop-color="#abc8e7"/><stop offset="0.2746" stop-color="#cee6f4"/><stop offset="0.2929" stop-color="#dff3f8"/><stop offset="0.3058" stop-color="#d4e4e9"/><stop offset="0.3131" stop-color="#afb5b7"/><stop offset="0.3186" stop-color="#888887"/><stop offset="0.3241" stop-color="#706c6a"/><stop offset="0.3296" stop-color="#6d6967"/><stop offset="0.3699" stop-color="#6c6561"/><stop offset="0.4340" stop-color="#6a635e"/><stop offset="1" stop-color="#6a625d"/></linearGradient>
<linearGradient id="g32" gradientUnits="userSpaceOnUse" x1="0" y1="96" x2="0" y2="642"><stop offset="0.0000" stop-color="#7690bd"/><stop offset="0.0970" stop-color="#809cc8"/><stop offset="0.1501" stop-color="#88a5d1"/><stop offset="0.1977" stop-color="#94b3dc"/><stop offset="0.2398" stop-color="#acc9e8"/><stop offset="0.2746" stop-color="#d0e7f4"/><stop offset="0.2930" stop-color="#e0f3f9"/><stop offset="0.3058" stop-color="#d5e4ea"/><stop offset="0.3131" stop-color="#afb5b7"/><stop offset="0.3186" stop-color="#898888"/><stop offset="0.3241" stop-color="#706c6a"/><stop offset="0.3296" stop-color="#6d6967"/><stop offset="0.3699" stop-color="#6c6561"/><stop offset="0.4340" stop-color="#6a635e"/><stop offset="1" stop-color="#6a625d"/></linearGradient>
<linearGradient id="g33" gradientUnits="userSpaceOnUse" x1="0" y1="96" x2="0" y2="642"><stop offset="0.0000" stop-color="#7691be"/><stop offset="0.0972" stop-color="#809dc9"/><stop offset="0.1503" stop-color="#88a6d2"/><stop offset="0.1979" stop-color="#95b3dd"/><stop offset="0.2400" stop-color="#acc9e8"/><stop offset="0.2748" stop-color="#d1e8f5"/><stop offset="0.2932" stop-color="#e0f4f9"/><stop offset="0.3060" stop-color="#d5e5ea"/><stop offset="0.3133" stop-color="#b0b6b8"/><stop offset="0.3188" stop-color="#898888"/><stop offset="0.3243" stop-color="#706c6a"/><stop offset="0.3298" stop-color="#6d6967"/><stop offset="0.3701" stop-color="#6c6561"/><stop offset="0.4342" stop-color="#6a635e"/><stop offset="1" stop-color="#6a625d"/></linearGradient>
<linearGradient id="g34" gradientUnits="userSpaceOnUse" x1="0" y1="96" x2="0" y2="642"><stop offset="0.0000" stop-color="#7792bf"/><stop offset="0.0974" stop-color="#819dca"/><stop offset="0.1505" stop-color="#89a6d3"/><stop offset="0.1981" stop-color="#95b4de"/><stop offset="0.2402" stop-color="#adcae9"/><stop offset="0.2750" stop-color="#d2e9f6"/><stop offset="0.2934" stop-color="#e1f4f9"/><stop offset="0.3062" stop-color="#d6e5ea"/><stop offset="0.3135" stop-color="#b0b6b8"/><stop offset="0.3190" stop-color="#898988"/><stop offset="0.3245" stop-color="#706c6a"/><stop offset="0.3300" stop-color="#6d6967"/><stop offset="0.3703" stop-color="#6c6561"/><stop offset="0.4344" stop-color="#6a635e"/><stop offset="1" stop-color="#6a625d"/></linearGradient>
<linearGradient id="g35" gradientUnits="userSpaceOnUse" x1="0" y1="96" x2="0" y2="642"><stop offset="0.0000" stop-color="#7792c0"/><stop offset="0.0976" stop-color="#819ecb"/><stop offset="0.1507" stop-color="#89a7d3"/><stop offset="0.1983" stop-color="#96b5de"/><stop offset="0.2404" stop-color="#aecbe9"/><stop offset="0.2752" stop-color="#d3eaf6"/><stop offset="0.2936" stop-color="#e1f4fa"/><stop offset="0.3064" stop-color="#d7e6eb"/><stop offset="0.3137" stop-color="#b1b7b9"/><stop offset="0.3192" stop-color="#898988"/><stop offset="0.3247" stop-color="#706c6a"/><stop offset="0.3302" stop-color="#6d6967"/><stop offset="0.3705" stop-color="#6c6561"/><stop offset="0.4346" stop-color="#6a635e"/><stop offset="1" stop-color="#6a625d"/></linearGradient>
<linearGradient id="g36" gradientUnits="userSpaceOnUse" x1="0" y1="96" x2="0" y2="642"><stop offset="0.0000" stop-color="#7893c1"/><stop offset="0.0978" stop-color="#829fcc"/><stop offset="0.1509" stop-color="#8aa8d4"/><stop offset="0.1985" stop-color="#97b5df"/><stop offset="0.2406" stop-color="#aecbea"/><stop offset="0.2754" stop-color="#d5ebf7"/><stop offset="0.2938" stop-color="#e2f5fa"/><stop offset="0.3066" stop-color="#d7e6eb"/><stop offset="0.3139" stop-color="#b2b8ba"/><stop offset="0.3194" stop-color="#898989"/><stop offset="0.3249" stop-color="#706c6a"/><stop offset="0.3304" stop-color="#6d6967"/><stop offset="0.3707" stop-color="#6c6561"/><stop offset="0.4348" stop-color="#6a635e"/><stop offset="1" stop-color="#6a625d"/></linearGradient>
<linearGradient id="g37" gradientUnits="userSpaceOnUse" x1="0" y1="96" x2="0" y2="642"><stop offset="0.0000" stop-color="#7894c2"/><stop offset="0.0980" stop-color="#829fcc"/><stop offset="0.1511" stop-color="#8aa8d5"/><stop offset="0.1987" stop-color="#97b6e0"/><stop offset="0.2408" stop-color="#afccea"/><stop offset="0.2756" stop-color="#d6ecf8"/><stop offset="0.2940" stop-color="#e2f5fa"/><stop offset="0.3068" stop-color="#d8e7ec"/><stop offset="0.3141" stop-color="#b2b8ba"/><stop offset="0.3196" stop-color="#898989"/><stop offset="0.3251" stop-color="#706c6a"/><stop offset="0.3306" stop-color="#6d6967"/><stop offset="0.3709" stop-color="#6c6561"/><stop offset="0.4350" stop-color="#6a635e"/><stop offset="1" stop-color="#6a625d"/></linearGradient>
<linearGradient id="g38" gradientUnits="userSpaceOnUse" x1="0" y1="96" x2="0" y2="642"><stop offset="0.0000" stop-color="#7994c3"/><stop offset="0.0985" stop-color="#83a0cd"/><stop offset="0.1516" stop-color="#8ba9d5"/><stop offset="0.1992" stop-color="#98b7e0"/><stop offset="0.2413" stop-color="#b0cdeb"/><stop offset="0.2761" stop-color="#d7eef8"/><stop offset="0.2944" stop-color="#e3f5fa"/><stop offset="0.3073" stop-color="#d9e7ec"/><stop offset="0.3146" stop-color="#b3b9bb"/><stop offset="0.3201" stop-color="#8a8989"/><stop offset="0.3256" stop-color="#706c6a"/><stop offset="0.3311" stop-color="#6d6967"/><stop offset="0.3714" stop-color="#6c6561"/><stop offset="0.4355" stop-color="#6a635e"/><stop offset="1" stop-color="#6a625d"/></linearGradient>
<linearGradient id="g39" gradientUnits="userSpaceOnUse" x1="0" y1="96" x2="0" y2="642"><stop offset="0.0000" stop-color="#7995c4"/><stop offset="0.0990" stop-color="#83a0ce"/><stop offset="0.1521" stop-color="#8ba9d6"/><stop offset="0.1997" stop-color="#98b7e1"/><stop offset="0.2418" stop-color="#b0cdeb"/><stop offset="0.2766" stop-color="#d8eff9"/><stop offset="0.2949" stop-color="#e3f6fb"/><stop offset="0.3078" stop-color="#d9e7ec"/><stop offset="0.3151" stop-color="#b3b9bb"/><stop offset="0.3206" stop-color="#8a8a8a"/><stop offset="0.3261" stop-color="#706c6a"/><stop offset="0.3316" stop-color="#6d6967"/><stop offset="0.3719" stop-color="#6c6561"/><stop offset="0.4360" stop-color="#6a635e"/><stop offset="1" stop-color="#6a625d"/></linearGradient>
<linearGradient id="g40" gradientUnits="userSpaceOnUse" x1="0" y1="96" x2="0" y2="642"><stop offset="0.0000" stop-color="#7a96c5"/><stop offset="0.0995" stop-color="#84a1cf"/><stop offset="0.1526" stop-color="#8caad7"/><stop offset="0.2002" stop-color="#99b8e2"/><stop offset="0.2423" stop-color="#b1ceec"/><stop offset="0.2771" stop-color="#daf0fa"/><stop offset="0.2954" stop-color="#e4f6fb"/><stop offset="0.3082" stop-color="#dae8ed"/><stop offset="0.3156" stop-color="#b4babc"/><stop offset="0.3211" stop-color="#8a8a8a"/><stop offset="0.3266" stop-color="#706c6a"/><stop offset="0.3321" stop-color="#6d6967"/><stop offset="0.3723" stop-color="#6c6561"/><stop offset="0.4364" stop-color="#6a635e"/><stop offset="1" stop-color="#6a625d"/></linearGradient>
<linearGradient id="g41" gradientUnits="userSpaceOnUse" x1="0" y1="96" x2="0" y2="642"><stop offset="0.0000" stop-color="#7b97c6"/><stop offset="0.0999" stop-color="#84a2d0"/><stop offset="0.1531" stop-color="#8dabd7"/><stop offset="0.2007" stop-color="#9ab9e2"/><stop offset="0.2428" stop-color="#b2cfec"/><stop offset="0.2776" stop-color="#daf0fa"/><stop offset="0.2959" stop-color="#e4f6fb"/><stop offset="0.3087" stop-color="#dae8ed"/><stop offset="0.3161" stop-color="#b4babb"/><stop offset="0.3216" stop-color="#8a8a8a"/><stop offset="0.3270" stop-color="#706c6a"/><stop offset="0.3325" stop-color="#6d6967"/><stop offset="0.3728" stop-color="#6c6561"/><stop offset="0.4369" stop-color="#6a635e"/><stop offset="1" stop-color="#6a625d"/></linearGradient>
<linearGradient id="g42" gradientUnits="userSpaceOnUse" x1="0" y1="96" x2="0" y2="642"><stop offset="0.0000" stop-color="#7b98c7"/><stop offset="0.1004" stop-color="#85a2d0"/><stop offset="0.1535" stop-color="#8dabd8"/><stop offset="0.2012" stop-color="#9bbae3"/><stop offset="0.2433" stop-color="#b3d0ed"/><stop offset="0.2781" stop-color="#dbf1fa"/><stop offset="0.2964" stop-color="#e4f6fb"/><stop offset="0.3092" stop-color="#d9e7ec"/><stop offset="0.3165" stop-color="#b3b9bb"/><stop offset="0.3220" stop-color="#8a8a8a"/><stop offset="0.3275" stop-color="#706c6a"/><stop offset="0.3330" stop-color="#6d6967"/><stop offset="0.3733" stop-color="#6c6561"/><stop offset="0.4374" stop-color="#6a635e"/><stop offset="1" stop-color="#6a625d"/></linearGradient>
<linearGradient id="g43" gradientUnits="userSpaceOnUse" x1="0" y1="96" x2="0" y2="642"><stop offset="0.0000" stop-color="#7c98c8"/><stop offset="0.1009" stop-color="#86a3d1"/><stop offset="0.1540" stop-color="#8eacd9"/><stop offset="0.2016" stop-color="#9cbbe4"/><stop offset="0.2438" stop-color="#b4d1ee"/><stop offset="0.2786" stop-color="#dcf1fb"/><stop offset="0.2969" stop-color="#e4f6fb"/><stop offset="0.3097" stop-color="#d9e7eb"/><stop offset="0.3170" stop-color="#b3b8ba"/><stop offset="0.3225" stop-color="#8a8989"/><stop offset="0.3280" stop-color="#706c6a"/><stop offset="0.3335" stop-color="#6d6967"/><stop offset="0.3738" stop-color="#6c6561"/><stop offset="0.4379" stop-color="#6a635e"/><stop offset="1" stop-color="#6a625d"/></linearGradient>
<linearGradient id="g44" gradientUnits="userSpaceOnUse" x1="0" y1="96" x2="0" y2="642"><stop offset="0.0000" stop-color="#7d99c9"/><stop offset="0.1014" stop-color="#86a4d2"/><stop offset="0.1545" stop-color="#8fadd9"/><stop offset="0.2021" stop-color="#9dbce4"/><stop offset="0.2443" stop-color="#b6d2ee"/><stop offset="0.2791" stop-color="#dcf2fb"/><stop offset="0.2974" stop-color="#e4f6fb"/><stop offset="0.3102" stop-color="#d8e6eb"/><stop offset="0.3175" stop-color="#b2b8b9"/><stop offset="0.3230" stop-color="#8a8989"/><stop offset="0.3285" stop-color="#706c6a"/><stop offset="0.3340" stop-color="#6d6967"/><stop offset="0.3743" stop-color="#6c6561"/><stop offset="0.4384" stop-color="#6a635e"/><stop offset="1" stop-color="#6a625d"/></linearGradient>
<linearGradient id="g45" gradientUnits="userSpaceOnUse" x1="0" y1="96" x2="0" y2="642"><stop offset="0.0000" stop-color="#7e9aca"/><stop offset="0.1020" stop-color="#87a4d2"/><stop offset="0.1551" stop-color="#90adda"/><stop offset="0.2027" stop-color="#9ebce5"/><stop offset="0.2449" stop-color="#b7d3ef"/><stop offset="0.2797" stop-color="#ddf3fb"/><stop offset="0.2980" stop-color="#e5f6fb"/><stop offset="0.3108" stop-color="#d8e5ea"/><stop offset="0.3181" stop-color="#b1b7b9"/><stop offset="0.3236" stop-color="#898989"/><stop offset="0.3291" stop-color="#706c6a"/><stop offset="0.3346" stop-color="#6d6967"/><stop offset="0.3749" stop-color="#6c6561"/><stop offset="0.4390" stop-color="#6a635e"/><stop offset="1" stop-color="#6a625d"/></linearGradient>
<linearGradient id="g46" gradientUnits="userSpaceOnUse" x1="0" y1="96" x2="0" y2="642"><stop offset="0.0000" stop-color="#7f9bcb"/><stop offset="0.1027" stop-color="#88a5d3"/><stop offset="0.1559" stop-color="#91aeda"/><stop offset="0.2035" stop-color="#9fbde6"/><stop offset="0.2456" stop-color="#b8d4ef"/><stop offset="0.2804" stop-color="#def3fb"/><stop offset="0.2987" stop-color="#e5f6fb"/><stop offset="0.3115" stop-color="#d8e5ea"/><stop offset="0.3189" stop-color="#b1b6b8"/><stop offset="0.3244" stop-color="#898988"/><stop offset="0.3299" stop-color="#706c6a"/><stop offset="0.3353" stop-color="#6d6967"/><stop offset="0.3756" stop-color="#6c6561"/><stop offset="0.4397" stop-color="#6a635e"/><stop offset="1" stop-color="#6a625d"/></linearGradient>
<linearGradient id="g47" gradientUnits="userSpaceOnUse" x1="0" y1="96" x2="0" y2="642"><stop offset="0.0000" stop-color="#7f9ccc"/><stop offset="0.1035" stop-color="#88a6d4"/><stop offset="0.1566" stop-color="#91afdb"/><stop offset="0.2042" stop-color="#a0bee6"/><stop offset="0.2463" stop-color="#bad5f0"/><stop offset="0.2811" stop-color="#def4fb"/><stop offset="0.2995" stop-color="#e5f6fb"/><stop offset="0.3123" stop-color="#d7e4e9"/><stop offset="0.3196" stop-color="#b0b6b7"/><stop offset="0.3251" stop-color="#898988"/><stop offset="0.3306" stop-color="#706c6a"/><stop offset="0.3361" stop-color="#6d6967"/><stop offset="0.3764" stop-color="#6c6561"/><stop offset="0.4405" stop-color="#6a635e"/><stop offset="1" stop-color="#6a625d"/></linearGradient>
<linearGradient id="g48" gradientUnits="userSpaceOnUse" x1="0" y1="96" x2="0" y2="642"><stop offset="0.0000" stop-color="#809dcd"/><stop offset="0.1042" stop-color="#89a6d4"/><stop offset="0.1573" stop-color="#92b0dc"/><stop offset="0.2049" stop-color="#a1bfe7"/><stop offset="0.2471" stop-color="#bbd6f1"/><stop offset="0.2819" stop-color="#dff4fc"/><stop offset="0.3002" stop-color="#e5f6fa"/><stop offset="0.3130" stop-color="#d7e4e8"/><stop offset="0.3203" stop-color="#b0b5b6"/><stop offset="0.3258" stop-color="#898888"/><stop offset="0.3313" stop-color="#706c6a"/><stop offset="0.3368" stop-color="#6d6967"/><stop offset="0.3771" stop-color="#6c6561"/><stop offset="0.4412" stop-color="#6a635e"/><stop offset="1" stop-color="#6a625d"/></linearGradient>
<linearGradient id="g49" gradientUnits="userSpaceOnUse" x1="0" y1="96" x2="0" y2="642"><stop offset="0.0000" stop-color="#819ece"/><stop offset="0.1049" stop-color="#8aa7d5"/><stop offset="0.1581" stop-color="#93b0dc"/><stop offset="0.2057" stop-color="#a2c0e8"/><stop offset="0.2478" stop-color="#bcd7f1"/><stop offset="0.2826" stop-color="#e0f5fc"/><stop offset="0.3009" stop-color="#e5f6fa"/><stop offset="0.3137" stop-color="#d6e3e8"/><stop offset="0.3211" stop-color="#afb4b6"/><stop offset="0.3266" stop-color="#898888"/><stop offset="0.3321" stop-color="#706c6a"/><stop offset="0.3375" stop-color="#6d6967"/><stop offset="0.3778" stop-color="#6c6561"/><stop offset="0.4419" stop-color="#6a635e"/><stop offset="1" stop-color="#6a625d"/></linearGradient>
<linearGradient id="g50" gradientUnits="userSpaceOnUse" x1="0" y1="96" x2="0" y2="642"><stop offset="0.0000" stop-color="#829ecf"/><stop offset="0.1056" stop-color="#8aa8d6"/><stop offset="0.1587" stop-color="#94b1dd"/><stop offset="0.2064" stop-color="#a3c1e8"/><stop offset="0.2485" stop-color="#bdd8f2"/><stop offset="0.2833" stop-color="#e0f5fc"/><stop offset="0.3016" stop-color="#e5f6fa"/><stop offset="0.3144" stop-color="#d6e3e7"/><stop offset="0.3217" stop-color="#afb4b5"/><stop offset="0.3272" stop-color="#898887"/><stop offset="0.3327" stop-color="#706c6a"/><stop offset="0.3382" stop-color="#6d6967"/><stop offset="0.3785" stop-color="#6c6561"/><stop offset="0.4426" stop-color="#6a635e"/><stop offset="1" stop-color="#6a625d"/></linearGradient>
<linearGradient id="g51" gradientUnits="userSpaceOnUse" x1="0" y1="96" x2="0" y2="642"><stop offset="0.0000" stop-color="#839fd0"/><stop offset="0.1063" stop-color="#8ba8d6"/><stop offset="0.1594" stop-color="#95b2dd"/><stop offset="0.2070" stop-color="#a4c2e9"/><stop offset="0.2491" stop-color="#bfd9f2"/><stop offset="0.2839" stop-color="#e1f6fc"/><stop offset="0.3022" stop-color="#e5f6fa"/><stop offset="0.3150" stop-color="#d6e2e7"/><stop offset="0.3224" stop-color="#aeb3b4"/><stop offset="0.3279" stop-color="#898887"/><stop offset="0.3334" stop-color="#706c6a"/><stop offset="0.3389" stop-color="#6d6967"/><stop offset="0.3792" stop-color="#6c6561"/><stop offset="0.4433" stop-color="#6a635e"/><stop offset="1" stop-color="#6a625d"/></linearGradient>
<linearGradient id="g52" gradientUnits="userSpaceOnUse" x1="0" y1="96" x2="0" y2="642"><stop offset="0.0007" stop-color="#83a0d1"/><stop offset="0.1069" stop-color="#8ca9d7"/><stop offset="0.1600" stop-color="#95b3de"/><stop offset="0.2076" stop-color="#a6c3ea"/><stop offset="0.2497" stop-color="#c0dbf3"/><stop offset="0.2845" stop-color="#e2f6fc"/><stop offset="0.3029" stop-color="#e6f6fa"/><stop offset="0.3157" stop-color="#d5e2e6"/><stop offset="0.3230" stop-color="#aeb2b3"/><stop offset="0.3285" stop-color="#888887"/><stop offset="0.3340" stop-color="#706c6a"/><stop offset="0.3395" stop-color="#6d6967"/><stop offset="0.3798" stop-color="#6c6561"/><stop offset="0.4439" stop-color="#6a635e"/><stop offset="1" stop-color="#6a625d"/></linearGradient>
<linearGradient id="g53" gradientUnits="userSpaceOnUse" x1="0" y1="96" x2="0" y2="642"><stop offset="0.0013" stop-color="#84a1d2"/><stop offset="0.1075" stop-color="#8caad8"/><stop offset="0.1606" stop-color="#96b3df"/><stop offset="0.2083" stop-color="#a7c4ea"/><stop offset="0.2504" stop-color="#c1dcf4"/><stop offset="0.2852" stop-color="#e2f7fd"/><stop offset="0.3035" stop-color="#e6f6fa"/><stop offset="0.3163" stop-color="#d5e1e5"/><stop offset="0.3236" stop-color="#adb2b3"/><stop offset="0.3291" stop-color="#888787"/><stop offset="0.3346" stop-color="#706c6a"/><stop offset="0.3401" stop-color="#6d6967"/><stop offset="0.3804" stop-color="#6c6561"/><stop offset="0.4445" stop-color="#6a635e"/><stop offset="1" stop-color="#6a625d"/></linearGradient>
<linearGradient id="g54" gradientUnits="userSpaceOnUse" x1="0" y1="96" x2="0" y2="642"><stop offset="0.0019" stop-color="#85a2d3"/><stop offset="0.1082" stop-color="#8daad8"/><stop offset="0.1613" stop-color="#97b4df"/><stop offset="0.2089" stop-color="#a8c5eb"/><stop offset="0.2510" stop-color="#c2ddf4"/><stop offset="0.2858" stop-color="#e3f7fd"/><stop offset="0.3041" stop-color="#e6f6fa"/><stop offset="0.3169" stop-color="#d4e1e5"/><stop offset="0.3243" stop-color="#adb1b2"/><stop offset="0.3298" stop-color="#888786"/><stop offset="0.3353" stop-color="#706c6a"/><stop offset="0.3408" stop-color="#6d6967"/><stop offset="0.3810" stop-color="#6c6561"/><stop offset="0.4451" stop-color="#6a635e"/><stop offset="1" stop-color="#6a625d"/></linearGradient>
<linearGradient id="g55" gradientUnits="userSpaceOnUse" x1="0" y1="96" x2="0" y2="642"><stop offset="0.0026" stop-color="#86a3d4"/><stop offset="0.1088" stop-color="#8eabd9"/><stop offset="0.1619" stop-color="#98b5e0"/><stop offset="0.2095" stop-color="#a9c6ec"/><stop offset="0.2516" stop-color="#c4def5"/><stop offset="0.2864" stop-color="#e4f8fd"/><stop offset="0.3048" stop-color="#e6f6fa"/><stop offset="0.3176" stop-color="#d4e0e4"/><stop offset="0.3249" stop-color="#acb0b1"/><stop offset="0.3304" stop-color="#888786"/><stop offset="0.3359" stop-color="#706c6a"/><stop offset="0.3414" stop-color="#6d6967"/><stop offset="0.3817" stop-color="#6c6561"/><stop offset="0.4458" stop-color="#6a635e"/><stop offset="1" stop-color="#6a625d"/></linearGradient>
<linearGradient id="g56" gradientUnits="userSpaceOnUse" x1="0" y1="96" x2="0" y2="642"><stop offset="0.0032" stop-color="#86a3d4"/><stop offset="0.1094" stop-color="#8eabd9"/><stop offset="0.1625" stop-color="#98b5e0"/><stop offset="0.2101" stop-color="#a9c6ec"/><stop offset="0.2523" stop-color="#c4def5"/><stop offset="0.2871" stop-color="#e4f8fd"/><stop offset="0.3054" stop-color="#e6f6fa"/><stop offset="0.3182" stop-color="#d4e0e4"/><stop offset="0.3255" stop-color="#acb0b1"/><stop offset="0.3310" stop-color="#888786"/><stop offset="0.3365" stop-color="#706c6a"/><stop offset="0.3420" stop-color="#6d6967"/><stop offset="0.3823" stop-color="#6c6561"/><stop offset="0.4464" stop-color="#6a635e"/><stop offset="1" stop-color="#6a625d"/></linearGradient>
<linearGradient id="g57" gradientUnits="userSpaceOnUse" x1="0" y1="96" x2="0" y2="642"><stop offset="0.0036" stop-color="#86a3d4"/><stop offset="0.1098" stop-color="#8eabd9"/><stop offset="0.1629" stop-color="#98b5e0"/><stop offset="0.2105" stop-color="#a9c6ec"/><stop offset="0.2527" stop-color="#c4def5"/><stop offset="0.2875" stop-color="#e4f8fd"/><stop offset="0.3058" stop-color="#e6f6fa"/><stop offset="0.3186" stop-color="#d4e0e4"/><stop offset="0.3259" stop-color="#acb0b1"/><stop offset="0.3314" stop-color="#888786"/><stop offset="0.3369" stop-color="#706c6a"/><stop offset="0.3424" stop-color="#6d6967"/><stop offset="0.3827" stop-color="#6c6561"/><stop offset="0.4468" stop-color="#6a635e"/><stop offset="1" stop-color="#6a625d"/></linearGradient>
<clipPath id="gc"><rect x="548" y="96" width="916" height="494"/></clipPath>
<clipPath id="gs"><path d="M548 96H1464L1464 278.0 L1348 275.5 L1268 273.5 L1148 271.5 L1060 270.9 L1000 271.2 L908 272.5 L788 274.3 L668 276.0 L548 277.1z"/></clipPath>
<clipPath id="gg"><path d="M548 590H1464L1464 278.0 L1348 275.5 L1268 273.5 L1148 271.5 L1060 270.9 L1000 271.2 L908 272.5 L788 274.3 L668 276.0 L548 277.1z"/></clipPath>
</defs>
<rect x="548" y="96" width="16.6" height="546" fill="url(#g0)"/>
<rect x="564" y="96" width="16.6" height="546" fill="url(#g1)"/>
<rect x="580" y="96" width="16.6" height="546" fill="url(#g2)"/>
<rect x="596" y="96" width="16.6" height="546" fill="url(#g3)"/>
<rect x="612" y="96" width="16.6" height="546" fill="url(#g4)"/>
<rect x="628" y="96" width="16.6" height="546" fill="url(#g5)"/>
<rect x="644" y="96" width="16.6" height="546" fill="url(#g6)"/>
<rect x="660" y="96" width="16.6" height="546" fill="url(#g7)"/>
<rect x="676" y="96" width="16.6" height="546" fill="url(#g8)"/>
<rect x="692" y="96" width="16.6" height="546" fill="url(#g9)"/>
<rect x="708" y="96" width="16.6" height="546" fill="url(#g10)"/>
<rect x="724" y="96" width="16.6" height="546" fill="url(#g11)"/>
<rect x="740" y="96" width="16.6" height="546" fill="url(#g12)"/>
<rect x="756" y="96" width="16.6" height="546" fill="url(#g13)"/>
<rect x="772" y="96" width="16.6" height="546" fill="url(#g14)"/>
<rect x="788" y="96" width="16.6" height="546" fill="url(#g15)"/>
<rect x="804" y="96" width="16.6" height="546" fill="url(#g16)"/>
<rect x="820" y="96" width="16.6" height="546" fill="url(#g17)"/>
<rect x="836" y="96" width="16.6" height="546" fill="url(#g18)"/>
<rect x="852" y="96" width="16.6" height="546" fill="url(#g19)"/>
<rect x="868" y="96" width="16.6" height="546" fill="url(#g20)"/>
<rect x="884" y="96" width="16.6" height="546" fill="url(#g21)"/>
<rect x="900" y="96" width="16.6" height="546" fill="url(#g22)"/>
<rect x="916" y="96" width="16.6" height="546" fill="url(#g23)"/>
<rect x="932" y="96" width="16.6" height="546" fill="url(#g24)"/>
<rect x="948" y="96" width="16.6" height="546" fill="url(#g25)"/>
<rect x="964" y="96" width="16.6" height="546" fill="url(#g26)"/>
<rect x="980" y="96" width="16.6" height="546" fill="url(#g27)"/>
<rect x="996" y="96" width="16.6" height="546" fill="url(#g28)"/>
<rect x="1012" y="96" width="16.6" height="546" fill="url(#g29)"/>
<rect x="1028" y="96" width="16.6" height="546" fill="url(#g30)"/>
<rect x="1044" y="96" width="16.6" height="546" fill="url(#g31)"/>
<rect x="1060" y="96" width="16.6" height="546" fill="url(#g32)"/>
<rect x="1076" y="96" width="16.6" height="546" fill="url(#g33)"/>
<rect x="1092" y="96" width="16.6" height="546" fill="url(#g34)"/>
<rect x="1108" y="96" width="16.6" height="546" fill="url(#g35)"/>
<rect x="1124" y="96" width="16.6" height="546" fill="url(#g36)"/>
<rect x="1140" y="96" width="16.6" height="546" fill="url(#g37)"/>
<rect x="1156" y="96" width="16.6" height="546" fill="url(#g38)"/>
<rect x="1172" y="96" width="16.6" height="546" fill="url(#g39)"/>
<rect x="1188" y="96" width="16.6" height="546" fill="url(#g40)"/>
<rect x="1204" y="96" width="16.6" height="546" fill="url(#g41)"/>
<rect x="1220" y="96" width="16.6" height="546" fill="url(#g42)"/>
<rect x="1236" y="96" width="16.6" height="546" fill="url(#g43)"/>
<rect x="1252" y="96" width="16.6" height="546" fill="url(#g44)"/>
<rect x="1268" y="96" width="16.6" height="546" fill="url(#g45)"/>
<rect x="1284" y="96" width="16.6" height="546" fill="url(#g46)"/>
<rect x="1300" y="96" width="16.6" height="546" fill="url(#g47)"/>
<rect x="1316" y="96" width="16.6" height="546" fill="url(#g48)"/>
<rect x="1332" y="96" width="16.6" height="546" fill="url(#g49)"/>
<rect x="1348" y="96" width="16.6" height="546" fill="url(#g50)"/>
<rect x="1364" y="96" width="16.6" height="546" fill="url(#g51)"/>
<rect x="1380" y="96" width="16.6" height="546" fill="url(#g52)"/>
<rect x="1396" y="96" width="16.6" height="546" fill="url(#g53)"/>
<rect x="1412" y="96" width="16.6" height="546" fill="url(#g54)"/>
<rect x="1428" y="96" width="16.6" height="546" fill="url(#g55)"/>
<rect x="1444" y="96" width="16.6" height="546" fill="url(#g56)"/>
<rect x="1460" y="96" width="4.6" height="546" fill="url(#g57)"/>
<path id="mj" d="M594.3 96L521.0 590M820.6 96L747.3 590M1046.9 96L973.6 590M1273.2 96L1199.9 590M1499.5 96L1426.2 590M548 103.0L1464 123.3M548 188.5L1464 208.8M548 274.0L1464 294.3M548 359.5L1464 379.8M548 445.0L1464 465.3M548 530.5L1464 550.8"/>
<g clip-path="url(#gc)" fill="none" shape-rendering="crispEdges">
<path d="M549.0 96L475.7 590M571.7 96L498.4 590M616.9 96L543.6 590M639.6 96L566.3 590M662.2 96L588.9 590M684.8 96L611.5 590M707.5 96L634.1 590M730.1 96L656.8 590M752.7 96L679.4 590M775.3 96L702.0 590M798.0 96L724.7 590M843.2 96L769.9 590M865.9 96L792.6 590M888.5 96L815.2 590M911.1 96L837.8 590M933.8 96L860.4 590M956.4 96L883.1 590M979.0 96L905.7 590M1001.6 96L928.3 590M1024.3 96L951.0 590M1069.5 96L996.2 590M1092.2 96L1018.9 590M1114.8 96L1041.5 590M1137.4 96L1064.1 590M1160.0 96L1086.7 590M1182.7 96L1109.4 590M1205.3 96L1132.0 590M1227.9 96L1154.6 590M1250.6 96L1177.3 590M1295.8 96L1222.5 590M1318.5 96L1245.2 590M1341.1 96L1267.8 590M1363.7 96L1290.4 590M1386.3 96L1313.0 590M1409.0 96L1335.7 590M1431.6 96L1358.3 590M1454.2 96L1380.9 590M1476.9 96L1403.6 590M1522.1 96L1448.8 590M548 77.3L1464 97.7M548 85.9L1464 106.2M548 94.5L1464 114.8M548 111.5L1464 131.9M548 120.1L1464 140.4M548 128.7L1464 149.0M548 137.2L1464 157.5M548 145.8L1464 166.1M548 154.3L1464 174.6M548 162.8L1464 183.2M548 171.4L1464 191.7M548 179.9L1464 200.3M548 197.1L1464 217.4M548 205.6L1464 225.9M548 214.2L1464 234.5M548 222.7L1464 243.0M548 231.2L1464 251.6M548 239.8L1464 260.1M548 248.3L1464 268.7M548 256.9L1464 277.2M548 265.4L1464 285.8M548 282.6L1464 302.9M548 291.1L1464 311.4M548 299.6L1464 320.0M548 308.2L1464 328.5M548 316.8L1464 337.1M548 325.3L1464 345.6M548 333.9L1464 354.2M548 342.4L1464 362.7M548 350.9L1464 371.3M548 368.1L1464 388.4M548 376.6L1464 396.9M548 385.1L1464 405.5M548 393.7L1464 414.0M548 402.2L1464 422.6M548 410.8L1464 431.1M548 419.4L1464 439.7M548 427.9L1464 448.2M548 436.4L1464 456.8M548 453.6L1464 473.9M548 462.1L1464 482.4M548 470.6L1464 491.0M548 479.2L1464 499.5M548 487.8L1464 508.1M548 496.3L1464 516.6M548 504.9L1464 525.2M548 513.4L1464 533.7M548 522.0L1464 542.3M548 539.0L1464 559.4M548 547.6L1464 567.9M548 556.1L1464 576.5M548 564.7L1464 585.0M548 573.2L1464 593.6M548 581.8L1464 602.1" stroke="#9a9a9a" stroke-opacity=".07" stroke-width="1"/>
<use href="#mj" clip-path="url(#gs)" stroke="#7c7884" stroke-opacity=".6"/>
<use href="#mj" clip-path="url(#gg)" stroke="#b4b4b4" stroke-opacity=".28"/>
</g>
</svg>
<!-- SCENE OVERLAYS -->
<div class="a" style="left:550px;top:98px;width:38px;height:146.5px;background:#191c20;border-radius:4px"></div>
<div class="ov" style="top:116px;border-radius:3px 3px 0 0"></div>
<div class="ov" style="top:137px;background:#46607c"></div>
<div class="ov" style="top:158px"></div>
<div class="ov" style="top:179px"></div>
<div class="ov" style="top:200px"></div>
<div class="ov" style="top:221px;border-radius:0 0 3px 3px"></div>
<svg style="left:548px;top:96px" width="916" height="546" viewBox="548 96 916 546">
 <path d="M561 104.5h16M561 107.5h16" stroke="#585858" stroke-width="1"/>
  <!-- hand -->
 <g transform="translate(569,125.500) scale(1.130,1.040) translate(-568.600,-125.500)"><path d="M564.2 128.6l-2.4 -3.2c-.7 -1 .6 -2 1.400 -1.100l1.700 1.800l-.7 -5.400c-.1 -1.100 1.300 -1.300 1.500 -.2l.9 3.900l.2 -5c0 -1.100 1.500 -1.100 1.600 0l.3 4.900l.9 -4.300c.2 -1 1.600 -.8 1.500 .3l-.4 4.900l1.500 -3c.5 -.9 1.800 -.3 1.400 .7l-2.200 6.400l-.9 3.400h-5z" fill="#d2d2d2"/></g>
 <!-- move -->
 <g fill="none" stroke="#dce9ec" stroke-width="1.300"><path d="M569 141v12.400M562.800 147.200h12.400"/></g>
 <g fill="#dce9ec"><path d="M569 139.300l2.600 3h-5.200zM569 155.100l2.600 -3h-5.200zM561.100 147.200l3 -2.600v5.200zM576.900 147.200l-3 -2.600v5.200z"/></g>
 <!-- rotate -->
 <g fill="none" stroke="#d2d2d2" stroke-width="1.100"><path d="M568.400 161.700a6.400 6.400 0 0 0 -3.600 11.700M569.600 174.600a6.400 6.400 0 0 0 3.400 -11.900"/><path d="M562.300 173.600h3.900v-3.600M575.700 162.400h-3.900v3.600"/></g>
 <!-- scale -->
 <g fill="none" stroke="#d2d2d2" stroke-width="1.100"><rect x="562.500" y="182.500" width="13" height="13"/><rect x="562.500" y="190.700" width="4.800" height="4.800"/><path d="M568.600 189.400l4.400 -4.400M569.700 184.900h3.400v3.400"/></g>
 <!-- rect -->
 <g fill="#d2d2d2"><rect x="562" y="203.200" width="2.600" height="2.600"/><rect x="573.400" y="203.200" width="2.600" height="2.600"/><rect x="562" y="214.400" width="2.600" height="2.600"/><rect x="573.400" y="214.400" width="2.600" height="2.600"/></g>
 <path d="M566 204.500h6M566 215.700h6M563.300 207.200v6M574.700 207.200v6" stroke="#d2d2d2" stroke-width="1.100"/>
 <!-- transform -->
 <circle cx="569" cy="231" r="6.300" fill="none" stroke="#d2d2d2" stroke-width="1.100" stroke-dasharray="7.600 2.300" stroke-dashoffset="3.800"/>
 <g stroke="#a9b1b3" stroke-width="1.500"><path d="M569 227v8M565 231h8"/></g>
 <g fill="#a9b1b3"><path d="M569 225.600l1.900 2.200h-3.800zM569 236.400l1.900 -2.200h-3.800zM563.600 231l2.200 -1.900v3.800zM574.400 231l-2.200 -1.900v3.800z"/></g>
 <path d="M574.400 223.300h2.600v2.600zM561 238.600h2.600l-2.600 -2.600z" fill="#e4e4e4"/>
 <!-- gizmo -->
 <path d="M1360 104.500h16M1360 107.500h16" stroke="#4b4540" stroke-width="1.200"/>
 <g fill="#fff" font-family="Liberation Sans,sans-serif" font-weight="bold" font-size="12"><text x="1404.700" y="118.300">y</text><text x="1370.800" y="150.200">z</text></g>
 <path d="M1403.500 122.200h9.600l-4.400 15.800h-.8z" fill="#9aa590"/><path d="M1403.500 122.200q4.800 -2.400 9.600 0l-.8 3q-4 -1.600 -8 0z" fill="#80877a"/>
 <path d="M1383.200 142.800l17 6.600l-17 4.200z" fill="#7694c5"/><path d="M1383.200 142.800l2 .6v9.800l-2 .4z" fill="#6682b0"/>
 <path d="M1434.600 143.200l-17.600 6l17.600 5z" fill="#d9e3e4"/><path d="M1434.600 143.200l.8 6l-.8 5l-1.600 -.6v-9.800z" fill="#bcb9b2"/>
 <path d="M1408.300 157.600l5.400 15.800q-5.400 2.800 -10.800 0z" fill="#d4e2e6"/>
 <rect x="1402.200" y="143.500" width="12.600" height="12.600" fill="#ecf9fc"/><path d="M1402.200 143.500l1.600 -3.400h11.400l-.4 3.400z" fill="#b4bfc1"/><path d="M1414.800 143.500l.4 -3.400v10l-.4 2z" fill="#9ca3a3"/>
 <rect x="1437.800" y="116.600" width="6.800" height="5.400" rx=".6" fill="#d4e3e6"/><path d="M1439.200 116.600v-1.200a2 2 0 0 1 4 -.4" fill="none" stroke="#d4e3e6" stroke-width="1.100"/>
 <g opacity=".3"><path d="M1392 196h10M1392 199h10M1392 202h10" stroke="#fff" stroke-width="1"/><text x="1405.500" y="204" font-family="Liberation Sans,sans-serif" font-size="12.500" fill="#e8dcc8">Iso</text></g>
 <!-- sun -->
 <g stroke="#a9b1a4" stroke-width="1.900"><path d="M1006.100 296.800v5.200M1006.100 311.800v5.200M996.100 306.900h5.200M1011 306.900h5.200"/></g>
 <g stroke="#f3e6c8" stroke-width="1.100"><path d="M1000.600 301.400l1.700 1.700M1011.600 301.400l-1.700 1.700M1000.600 312.400l1.700 -1.700M1011.600 312.400l-1.700 -1.700M1003.200 300l.7 1.700M1009 300l-.7 1.700M1003.200 313.800l.7 -1.700M1009 313.800l-.7 -1.700M999.200 304l1.700 .7M999.200 309.800l1.700 -.7M1013 304l-1.700 .7M1013 309.800l-1.700 -.7"/></g>
 <circle cx="1006.100" cy="306.900" r="4.700" fill="#6b6460"/><circle cx="1006.100" cy="306.900" r="4" fill="#ffefca"/>
 <!-- camera -->
 <g fill="#fff"><circle cx="947.600" cy="343.600" r="3.700"/><circle cx="953.500" cy="341" r="4.500"/><rect x="948" y="343" width="10" height="6.600" rx=".8"/><path d="M957.600 346l4.600 -2.600v5.600l-4.600 -2.200z"/></g>
</svg>
<!-- PROJECT -->
<div class="tabrow" style="left:0;top:645px;width:1464px;border-radius:0 4px 0 0"><div class="tab" style="left:0;width:75px;border-radius:0 3px 0 0;border-top:2px solid #3a72b0"></div></div>
<div class="ptb" style="left:0;top:664px;width:1464px;height:20px"></div>
<div class="a" style="left:0;top:684px;width:1464px;height:1px;background:#232323"></div>
<div class="pan" style="left:0;top:685px;width:202px;height:371px"></div>
<div class="a" style="left:202px;top:685px;width:1px;height:371px;background:#232323"></div>
<div class="a" style="left:189px;top:685px;width:1px;height:371px;background:#303030"></div>
<div class="a" style="left:203px;top:685px;width:1261px;height:21px;background:#414141"></div>
<div class="a" style="left:203px;top:706px;width:1261px;height:329px;background:#333"></div>
<div class="a" style="left:203px;top:1035px;width:1261px;height:21px;background:#424242"></div>
<div class="a" style="left:0;top:892px;width:189px;height:16px;background:#4d4d4d"></div>
<div class="a" style="left:192px;top:701px;width:9px;height:161px;background:#5e5e5e;border-radius:4.5px"></div>
<div class="t" style="left:18px;top:647.5px">Project</div>
<div class="t" style="left:100px;top:647.5px">Console</div>
<div class="sf" style="left:999px;top:666px;width:318px;height:16px"></div>
<div class="t" style="left:1446.5px;top:666.5px;color:#c4c4c4">18</div>
<div class="t" style="left:207px;top:687px;color:#bdbdbd">Assets</div>
<div class="t b" style="left:262px;top:687px;color:#dcdcdc;letter-spacing:0;font-size:12px">miya</div>
<div class="a" style="left:0;top:684px;width:189px;height:372px;overflow:hidden">
<div class="t b" style="left:30px;top:1px">Favorites</div>
<div class="t" style="left:43px;top:17px">All Materials</div>
<div class="t" style="left:43px;top:33px">All Models</div>
<div class="t" style="left:43px;top:49px">All Prefabs</div>
<div class="t b" style="left:30px;top:80px">Assets</div>
<div class="t" style="left:43px;top:96px">Grus</div>
<div class="t" style="left:57px;top:112px">Animation</div>
<div class="t" style="left:57px;top:128px">CygTool</div>
<div class="t" style="left:57px;top:144px">Materials</div>
<div class="t" style="left:57px;top:160px">Models</div>
<div class="t" style="left:57px;top:176px">Prefabs</div>
<div class="t" style="left:57px;top:192px">Textures</div>
<div class="t" style="left:43px;top:208px">miya</div>
<div class="t" style="left:43px;top:224px">nu gundam</div>
<div class="t b" style="left:30px;top:240px">Packages</div>
<div class="t" style="left:43px;top:256px">AvatarMaker</div>
<div class="t" style="left:57px;top:272px">_Cache</div>
<div class="t" style="left:57px;top:288px">Editor</div>
<div class="t" style="left:71px;top:304px">Resources</div>
<div class="t" style="left:57px;top:320px">Runtime</div>
<div class="t" style="left:57px;top:336px">Sample</div>
<div class="t" style="left:71px;top:352px">SampleAssets</div>
<div class="t" style="left:85px;top:368px">Animations</div>
</div>
<svg style="left:0;top:645px" width="1464" height="411" viewBox="0 645 1464 411">
<defs>
<path id="ad" d="M0 0h9l-4.500 8z" fill="#6e6e6e"/>
<path id="ar" d="M0 0l8 4.500l-8 4.500z" fill="#6e6e6e"/>
<path id="fc" d="M.8 0h4.700l1.400 1.900h4.600a.8 .8 0 0 1 .8 .8v6.500a.8 .8 0 0 1 -.8 .8h-10.700a.8 .8 0 0 1 -.8 -.8v-8.400a.8 .8 0 0 1 .8 -.8z" fill="#c4c4c4"/>
<g id="fo"><path d="M.7 9.300v-8.100a.7 .7 0 0 1 .7 -.7h3.700l1.300 1.700h4.400a.7 .7 0 0 1 .7 .7v1" fill="none" stroke="#c4c4c4" stroke-width="1.200"/><path d="M3.200 4.200h10.300l-2.300 5.800h-10.600z" fill="#c4c4c4"/></g>
<g id="mag" fill="none" stroke="#c4c4c4"><circle cx="4.300" cy="4.300" r="3.700" stroke-width="1.100"/><path d="M7 7l3.600 3.600" stroke-width="1.500"/></g>
<path id="star" transform="translate(-.6,-.8) scale(1.1)" d="M6 0l1.600 4h4.200l-3.400 2.600l1.300 4.200l-3.700 -2.600l-3.700 2.600l1.300 -4.200l-3.400 -2.600h4.200z" fill="#c4c4c4"/>
</defs>
<use href="#ad" x="-1.0" y="688"/>
<use href="#star" x="13" y="686.5"/>
<use href="#mag" x="27" y="703.0"/>
<use href="#mag" x="27" y="719.0"/>
<use href="#mag" x="27" y="735.0"/>
<use href="#ad" x="-1.0" y="768"/>
<use href="#fo" x="13" y="767"/>
<use href="#ad" x="13.5" y="784"/>
<use href="#fo" x="27" y="783"/>
<use href="#ar" x="28.3" y="799.7"/>
<use href="#fc" x="41" y="799"/>
<use href="#ar" x="28.3" y="815.7"/>
<use href="#fc" x="41" y="815"/>
<use href="#ar" x="28.3" y="831.7"/>
<use href="#fc" x="41" y="831"/>
<use href="#ar" x="28.3" y="847.7"/>
<use href="#fc" x="41" y="847"/>
<use href="#ar" x="28.3" y="863.7"/>
<use href="#fc" x="41" y="863"/>
<use href="#fc" x="41" y="879"/>
<use href="#ar" x="14.3" y="895.7"/>
<use href="#fc" x="27" y="895"/>
<use href="#fc" x="27" y="911"/>
<use href="#ad" x="-1.0" y="928"/>
<use href="#fo" x="13" y="927"/>
<use href="#ad" x="13.5" y="944"/>
<use href="#fo" x="27" y="943"/>
<use href="#fc" x="41" y="959"/>
<use href="#ad" x="27.5" y="976"/>
<use href="#fo" x="41" y="975"/>
<use href="#fc" x="55" y="991"/>
<use href="#fc" x="41" y="1007"/>
<use href="#ad" x="27.5" y="1024"/>
<use href="#fo" x="41" y="1023"/>
<use href="#ad" x="41.5" y="1040"/>
<use href="#fo" x="55" y="1039"/>
<use href="#fc" x="69" y="1055"/>
<path d="M2.600 650.700h4.400l1.400 1.800h5a.8 .8 0 0 1 .8 .8v6.600a.8 .8 0 0 1 -.8 .8h-10.800a.8 .8 0 0 1 -.8 -.8v-8.400a.8 .8 0 0 1 .8 -.8z" fill="#c4c4c4"/>
<rect x="85.400" y="649.600" width="9.800" height="10.400" rx="1.200" fill="#c4c4c4"/><path d="M87 652.300h6.600M87 654.800h6.600M87 657.300h4.600" stroke="#282828" stroke-width="1"/>
<rect x="1430.3" y="654.2" width="7.200" height="4.700" rx=".8" fill="none" stroke="#c4c4c4" stroke-width="1.300"/><path d="M1431.4 654.0v-2.300a2.700 2.700 0 0 1 5.400 0v.7" fill="none" stroke="#c4c4c4" stroke-width="1.300"/>
<g fill="#c4c4c4"><rect x="1450.200" y="649" width="1.700" height="1.700"/><rect x="1450.200" y="653" width="1.700" height="1.700"/><rect x="1450.200" y="657" width="1.700" height="1.700"/></g>
<path d="M1.800 674.200h11.600M7.600 668.400v11.600" stroke="#d2d2d2" stroke-width="1.700" fill="none"/><path d="M18.200 672.400h7.400l-3.700 4z" fill="#c4c4c4"/>
<g fill="none" stroke="#b4b4b4" stroke-width="1.200"><circle cx="1006.600" cy="673.400" r="2.200"/><path d="M1008.200 675.100l2.100 2.300"/></g>
<g fill="none" stroke="#c4c4c4" stroke-width="1.100"><path d="M1304.500 673.500v-4.600h9.600v9.600h-4.600"/><rect x="1302.500" y="674.500" width="4.600" height="4.600"/><path d="M1307.600 674.200l4.200 -3.600M1309 670.400h3v3"/></g>
<path d="M1299.500 666.500v15" stroke="#1f1f1f" stroke-width="1"/>
<g stroke="#2a2a2a" stroke-width="1"><path d="M1320.500 664v20M1346.500 664v20M1372.500 664v20M1398.500 664v20M1424.500 664v20"/></g>
<g fill="#c4c4c4"><rect x="1328.700" y="667.300" width="5.200" height="5"/><circle cx="1330.600" cy="676.400" r="3.400"/><path d="M1336 671.200l3.200 5.200h-6.400z"/></g>
<path d="M1353 675.600l6.500 -5.800l4.200 -.8l.3 4.400l-6.600 5.800z" fill="#c4c4c4"/><circle cx="1362" cy="671.200" r=".9" fill="#3c3c3c"/>
<path d="M1382 667.200h5.400l3.800 3.800v5.400l-3.800 3.800h-5.400l-3.800 -3.800v-5.400z" fill="#d6d6d6"/><path d="M1384.700 669.300v5.700" stroke="#3c3c3c" stroke-width="1.300"/><circle cx="1384.700" cy="677.400" r=".9" fill="#3c3c3c"/>
<path d="M1411 668.200l1.800 3.900l4.200 .5l-3.100 2.900l.8 4.200l-3.700 -2.100l-3.700 2.100l.8 -4.200l-3.100 -2.900l4.200 -.5z" fill="#8a8a8a"/>
<path d="M1430.200 674.200q7 -7.400 14 0q-7 7.400 -14 0z" fill="none" stroke="#6e6e6e" stroke-width="1.100"/><circle cx="1437.200" cy="673.600" r="2.700" fill="#6e6e6e"/>
<path d="M251.300 691.400l4 3.800l-4 3.800" fill="none" stroke="#9a9a9a" stroke-width="1.200"/>
<path d="M192.500 695h7l-3.500 -4.500z" fill="#c8c8c8"/><path d="M192.500 1045h7l-3.500 4.500z" fill="#c8c8c8"/>
<path d="M1393 1046h55" stroke="#5e5e5e" stroke-width="2"/><circle cx="1425" cy="1046" r="5.200" fill="#9a9e9a"/>
<path d="M227.9 731.900a2 2 0 0 1 2 -2h15l5.300 7.500h19.900a2 2 0 0 1 2 2v24.700a2 2 0 0 1 -2 2h-40.200a2 2 0 0 1 -2 -2z" fill="none" stroke="#c4c4c4" stroke-width="3.800" stroke-linejoin="round"/>
<path d="M303.9 731.900a2 2 0 0 1 2 -2h15l5.300 7.500h19.900a2 2 0 0 1 2 2v24.700a2 2 0 0 1 -2 2h-40.200a2 2 0 0 1 -2 -2z" fill="#c4c4c4" stroke="#c4c4c4" stroke-width="3.800" stroke-linejoin="round"/>
<path d="M379.9 731.900a2 2 0 0 1 2 -2h15l5.300 7.500h19.900a2 2 0 0 1 2 2v24.700a2 2 0 0 1 -2 2h-40.200a2 2 0 0 1 -2 -2z" fill="none" stroke="#c4c4c4" stroke-width="3.800" stroke-linejoin="round"/>
<path d="M467 734h16l5 5v23h-21z" fill="#f5f5f5"/><path d="M483 734v5h5z" fill="#cfe0e6"/><path d="M467 762h21" stroke="#d8d8d8" stroke-width="1"/>
<g fill="none" stroke="#7fd6fd" stroke-width="4" stroke-linejoin="round" stroke-linecap="round"><path d="M572.200 747v-12.500l-20.200 -11.500l-20.200 11.500v23l20.200 11.500l2 -1.100"/><path d="M531.800 734.500l20.200 11.500l20.200 -11.500M552 746v23"/></g>
<g fill="none" stroke="#e0714a" stroke-width="3.400"><path d="M569.200 750h-2.200a3 3 0 0 0 -3 3v5.500l-3.600 3.500l3.600 3.500v5.500a3 3 0 0 0 3 3h2.200"/><path d="M575.200 750h2.200a3 3 0 0 1 3 3v5.500l3.600 3.500l-3.600 3.500v5.500a3 3 0 0 1 -3 3h-2.200"/></g>
</svg>
<div class="t" style="left:198px;top:780px;width:100px;text-align:center;font-size:10.500px;color:#c4c4c4;letter-spacing:.1px">spa</div>
<div class="t" style="left:274.500px;top:780px;width:100px;text-align:center;font-size:10.500px;color:#c4c4c4;letter-spacing:.1px">tex</div>
<div class="t" style="left:351.500px;top:780px;width:100px;text-align:center;font-size:10.500px;color:#c4c4c4;letter-spacing:.1px">toon</div>
<!-- INSPECTOR -->
<div class="tabrow" style="left:1466px;width:454px;border-radius:0 4px 0 0"><div class="tab" style="left:0;width:92px"></div></div>
<div class="pan" style="left:1466px;top:70px;width:454px;height:986px"></div>
<div class="t" style="left:1490px;top:53.500px">Inspector</div>
<svg style="left:1467px;top:51px" width="453" height="19" viewBox="1467 51 453 19">
<circle cx="1479.800" cy="60.500" r="4.900" fill="#d8d8d8"/><path d="M1479.800 59.600v3.800" stroke="#3c3c3c" stroke-width="1.500"/><circle cx="1479.800" cy="57.800" r=".9" fill="#3c3c3c"/>
<rect x="1885.3" y="60.2" width="7.200" height="4.700" rx=".8" fill="none" stroke="#c4c4c4" stroke-width="1.300"/><path d="M1886.400 60.0v-2.300a2.700 2.700 0 0 1 5.400 0v.7" fill="none" stroke="#c4c4c4" stroke-width="1.300"/>
<g fill="#c4c4c4"><rect x="1905" y="55.800" width="1.700" height="1.700"/><rect x="1905" y="59.800" width="1.700" height="1.700"/><rect x="1905" y="63.800" width="1.700" height="1.700"/></g>
</svg>
<!-- STATUS BAR -->
<div class="a" style="left:0;top:1056px;width:1920px;height:22px;background:#191919"></div>
<div class="a" style="left:0;top:1078px;width:954px;height:2px;background:#c9cdcd"></div>
<div class="a" style="left:954px;top:1078px;width:181px;height:2px;background:#2c2c2c"></div>
<div class="a" style="left:1135px;top:1078px;width:455px;height:2px;background:#4a4a4a"></div>
<div class="a" style="left:1590px;top:1078px;width:330px;height:2px;background:#d4d8d8"></div>
<div class="t" style="left:39.200px;top:1059.500px;color:#c8c8c8;letter-spacing:.22px">avatar</div>
<div class="t" style="left:98px;top:1059.500px;color:#c8c8c8;letter-spacing:.35px">: 1a50738d-96b5-47f2-a1eb-04f9ddae941a</div>
<svg style="left:0;top:1056px" width="1920" height="24" viewBox="0 1056 1920 24">
<text x="14.5" y="1072.2" font-size="12" fill="#c8c8c8" font-family="'Liberation Sans','Noto Sans CJK SC',sans-serif" letter-spacing="0">上传</text>
<text x="74.7" y="1072.2" font-size="12" fill="#c8c8c8" font-family="'Liberation Sans','Noto Sans CJK SC',sans-serif" letter-spacing="0">成功</text>
<circle cx="4.200" cy="1067" r="6.800" fill="#e6e6e6"/><path d="M6 1072.500l4.500 1.800l-1.500 -4z" fill="#e6e6e6"/><path d="M4.200 1062.600v5.400" stroke="#191919" stroke-width="1.700"/><circle cx="4.200" cy="1070.400" r="1" fill="#191919"/>
<g stroke="#262626" stroke-width="1"><path d="M1815.500 1058v19M1841.500 1058v19M1867.500 1058v19M1893.500 1058v19"/></g>
<g fill="#c4c4c4"><ellipse cx="1828.300" cy="1068.600" rx="4.300" ry="5.500"/><circle cx="1828.300" cy="1063.200" r="2.600"/></g><g stroke="#c4c4c4" stroke-width="1.300"><path d="M1824.500 1066.500l-2.600 -1.600M1832.100 1066.500l2.600 -1.600M1824 1069.500h-2.800M1832.600 1069.500h2.800M1824.800 1072.500l-2.300 1.800M1831.800 1072.500l2.300 1.800M1826.300 1061.600l-1.300 -1.300M1830.300 1061.600l1.300 -1.300"/></g><path d="M1822.700 1060.600l13 13.600" stroke="#191919" stroke-width="1.600"/><path d="M1821.600 1061.600l13 13.600" stroke="#c4c4c4" stroke-width="1.200"/>
<g fill="#c4c4c4"><ellipse cx="1854.200" cy="1064" rx="6.200" ry="2.800"/><path d="M1848 1066.200q6.200 3.800 12.400 0v3q-6.200 3.800 -12.400 0zM1848 1070.600q6.200 3.800 12.400 0v2.600q-6.200 3.800 -12.400 0z"/></g><path d="M1848.900 1060.400l12.800 13.800" stroke="#191919" stroke-width="1.600"/><path d="M1847.800 1061.400l12.800 13.800" stroke="#c4c4c4" stroke-width="1.200"/>
<g fill="none" stroke="#c4c4c4" stroke-width="1.500"><path d="M1874.400 1065.600a6 6 0 0 1 10.600 -1.800M1885.800 1069.600a6 6 0 0 1 -10.600 1.800"/></g><path d="M1886.600 1060.800v4.200h-4.200zM1873.600 1074.400v-4.200h4.200z" fill="#c4c4c4"/><circle cx="1880.100" cy="1066.800" r="2.400" fill="#c4c4c4"/><rect x="1879" y="1069.400" width="2.200" height="1.800" fill="#c4c4c4"/><path d="M1874.900 1060.400l12.600 13.800" stroke="#191919" stroke-width="1.600"/><path d="M1873.800 1061.400l12.600 13.800" stroke="#c4c4c4" stroke-width="1.200"/>
<circle cx="1906" cy="1067.500" r="6.500" fill="none" stroke="#c4c4c4" stroke-width="1.300"/><path d="M1903 1067.700l2.100 2.100l3.800 -4" fill="none" stroke="#c4c4c4" stroke-width="1.600"/>
</svg>
<svg style="left:440px;top:778px" width="160" height="20" viewBox="440 778 160 20">
<text x="448" y="792.6" font-size="10" fill="#c4c4c4" font-family="'Liberation Sans','Noto Sans CJK JP',sans-serif" letter-spacing="0">椛暗式</text>
<text x="524" y="792.6" font-size="10" fill="#c4c4c4" font-family="'Liberation Sans','Noto Sans CJK JP',sans-serif" letter-spacing="0">椛暗式</text>
</svg>
<div class="t" style="left:478.3px;top:780.300px;font-size:10.500px;color:#c4c4c4;letter-spacing:.42px">-Miy...</div>
<div class="t" style="left:554.3px;top:780.300px;font-size:10.500px;color:#c4c4c4;letter-spacing:.42px">-Miy...</div>
</body></html>
